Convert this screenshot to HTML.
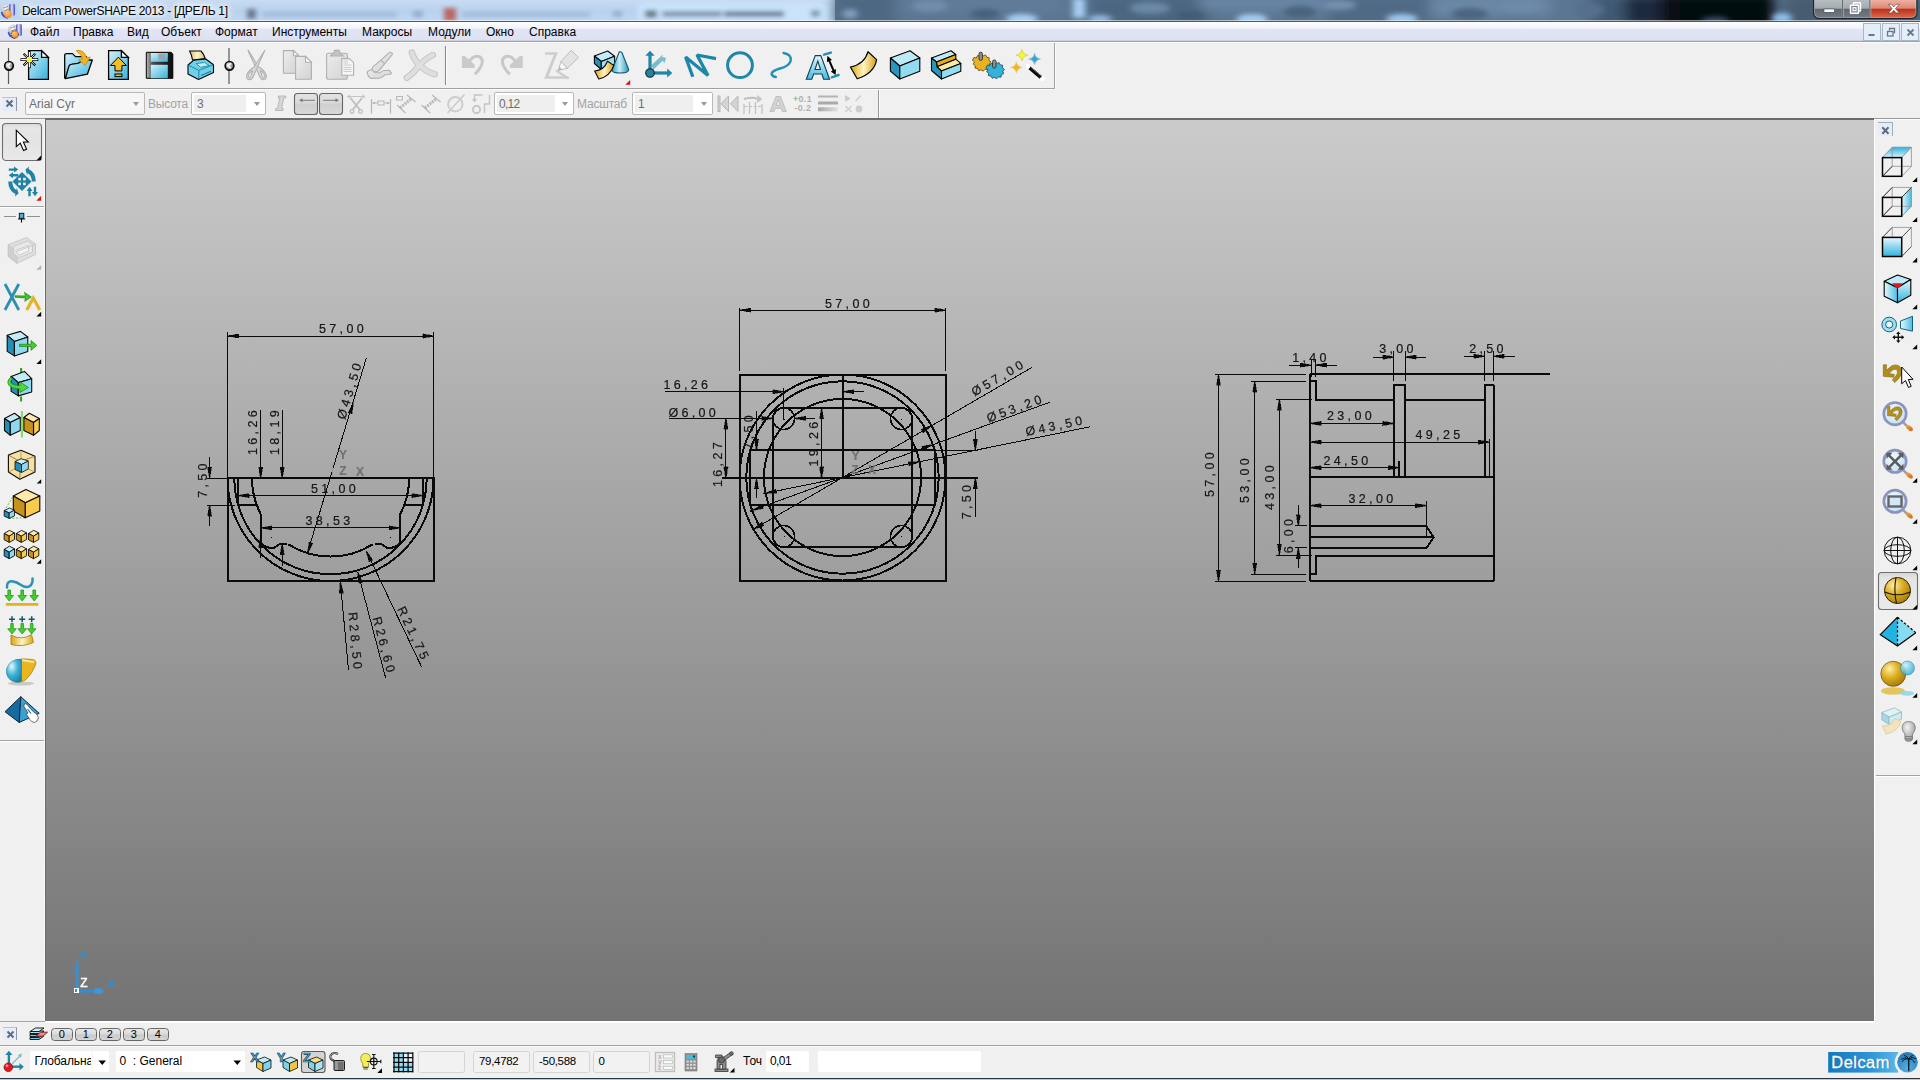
<!DOCTYPE html>
<html><head><meta charset="utf-8"><title>Delcam PowerSHAPE 2013</title>
<style>
html,body{margin:0;padding:0;}
body{width:1920px;height:1080px;overflow:hidden;position:relative;background:#f0f0f0;font-family:"Liberation Sans",sans-serif;font-size:12px;color:#000;}
.abs{position:absolute;}
#titlebar{left:0;top:0;width:1920px;height:21px;background:linear-gradient(90deg,#bcd5ee 0px,#b6d0ec 230px,#a9c8ea 470px,#b3d3f5 700px,#b4d4f6 830px,#5d7892 835px,#58738d 960px,#4a6580 1100px,#5f7c98 1250px,#4d6781 1400px,#1e2d3c 1560px,#0c141d 1700px,#101a25 1800px,#3a5068 1920px);}
#titleline{left:0;top:21px;width:1920px;height:1px;background:#4e5866;}
#titleline0{left:0;top:20px;width:1920px;height:1px;background:rgba(255,255,255,0.55);}
#menubar{left:0;top:22px;width:1920px;height:18px;background:linear-gradient(180deg,#fefeff 0%,#f3f5fb 32%,#e2e5f5 42%,#dee1f3 100%);}
#menuline{left:0;top:40px;width:1920px;height:1px;background:#cdd0dd;}
#menuline1{left:0;top:41px;width:1920px;height:1px;background:#a4a4a8;}
#menuline2{left:0;top:42px;width:1920px;height:1px;background:#fbfbfb;}
.menu{position:absolute;top:25px;font-size:12px;line-height:14px;color:#000;white-space:nowrap;}
#tb1{left:0;top:43px;width:1054px;height:45px;border-right:1px solid #a0a0a0;border-bottom:1px solid #a0a0a0;box-sizing:content-box;box-shadow:1px 1px 0 #fcfcfc;}
#tb2{left:0;top:90px;width:878px;height:28px;border-right:1px solid #989898;box-shadow:1px 0 0 #fcfcfc;}
#topline{left:0;top:118px;width:1920px;height:1px;background:#9a9a9a;}
#topline2{left:0;top:119px;width:1920px;height:1px;background:#fcfcfc;}
#vpwr{left:1874px;top:119px;width:1px;height:903px;background:#fff;}
#vpwb{left:45px;top:1021px;width:1830px;height:2px;background:#fff;}
#lbl{left:0;top:1021px;width:45px;height:1px;background:#a6a6a6;}
#viewport{left:45px;top:118px;width:1829px;height:903px;background:#6b6b6b;}
#vpgrad{left:46px;top:120px;width:1828px;height:901px;background:linear-gradient(180deg,#cbcbcb 0%,#737373 100%);}
#leftbar{left:0;top:119px;width:44px;height:902px;background:#f0f0f0;border-right:1px solid #f8f8f8;}
#rightbar{left:1875px;top:120px;width:45px;height:902px;background:#f0f0f0;}
#layerbar{left:0;top:1023px;width:1920px;height:22px;background:#f0f0f0;}
#statline{left:0;top:1045px;width:1920px;height:1px;background:#a0a0a0;}
#statline2{left:0;top:1046px;width:1920px;height:1px;background:#fbfbfb;}
#statbar{left:0;top:1047px;width:1920px;height:31px;background:#f0f0f0;}
#botedge{left:0;top:1078px;width:1920px;height:1px;background:#2c3440;}
#botedge2{left:0;top:1079px;width:1920px;height:1px;background:#b8c8dc;}
svg{position:absolute;left:0;top:0;overflow:visible;}
svg text{font-family:"Liberation Sans",sans-serif;}

</style></head>
<body>
<div id="titlebar" class="abs"></div>
<div id="menubar" class="abs"></div>
<div id="menuline" class="abs"></div><div id="menuline1" class="abs"></div>
<div id="menuline2" class="abs"></div>
<div class="menu" style="left:30px">Файл</div>
<div class="menu" style="left:73px">Правка</div>
<div class="menu" style="left:127px">Вид</div>
<div class="menu" style="left:161px">Объект</div>
<div class="menu" style="left:215px">Формат</div>
<div class="menu" style="left:272px">Инструменты</div>
<div class="menu" style="left:362px">Макросы</div>
<div class="menu" style="left:428px">Модули</div>
<div class="menu" style="left:486px">Окно</div>
<div class="menu" style="left:529px">Справка</div>
<div class="abs" style="left:0;top:0;width:1920px;height:21px;overflow:hidden;">
<svg width="1920" height="21" viewBox="0 0 1920 21" shape-rendering="auto">
<defs>
<filter id="bl3" x="-20%" y="-100%" width="140%" height="300%"><feGaussianBlur stdDeviation="3 2.5"/></filter>
<filter id="bl2" x="-20%" y="-100%" width="140%" height="300%"><feGaussianBlur stdDeviation="2.6 2"/></filter>
<filter id="bl6" x="-20%" y="-200%" width="140%" height="500%"><feGaussianBlur stdDeviation="7 4"/></filter>
<radialGradient id="aig" cx="0.4" cy="0.3" r="0.8"><stop offset="0" stop-color="#ffffff"/><stop offset="1" stop-color="#8d8d92"/></radialGradient><linearGradient id="aic" x1="0" y1="0" x2="1" y2="0"><stop offset="0" stop-color="#3d44b8"/><stop offset="0.45" stop-color="#e6e8ff"/><stop offset="1" stop-color="#3a3fae"/></linearGradient><radialGradient id="aio" cx="0.4" cy="0.3" r="0.8"><stop offset="0" stop-color="#ffc87a"/><stop offset="1" stop-color="#ee7c0a"/></radialGradient><linearGradient id="tgl" x1="0" y1="0" x2="0" y2="1"><stop offset="0" stop-color="#c8dcf3"/><stop offset="0.5" stop-color="#b8d2ee"/><stop offset="1" stop-color="#bdd7f4"/></linearGradient>
<linearGradient id="cbtn" x1="0" y1="0" x2="0" y2="1"><stop offset="0" stop-color="#b9bdc2"/><stop offset="0.48" stop-color="#a4a9af"/><stop offset="0.5" stop-color="#5f666e"/><stop offset="1" stop-color="#737b85"/></linearGradient>
<linearGradient id="cred" x1="0" y1="0" x2="0" y2="1"><stop offset="0" stop-color="#eeb0a4"/><stop offset="0.48" stop-color="#dc8672"/><stop offset="0.5" stop-color="#bd2f18"/><stop offset="1" stop-color="#d9664a"/></linearGradient>
</defs>
<rect x="0" y="0" width="835" height="21" fill="url(#tgl)"/>
<!-- blurred background content on the left -->
<g filter="url(#bl2)" opacity="0.85">
<rect x="247" y="9" width="9" height="10" fill="#5d6d84"/>
<rect x="262" y="12" width="135" height="5" fill="#93a9c6" opacity="0.7"/>
<rect x="413" y="11" width="10" height="6" fill="#8ea4c2"/>
<rect x="444" y="8" width="12" height="13" fill="#b9544e"/>
<rect x="462" y="12" width="128" height="5" fill="#93aaca" opacity="0.7"/>
<rect x="613" y="11" width="9" height="6" fill="#8fa7c6"/>
</g>
<g filter="url(#bl2)">
<rect x="638" y="3" width="192" height="20" rx="4" fill="#c9e3fc"/>
<rect x="645" y="10" width="12" height="8" fill="#6e7f8f"/>
<rect x="662" y="11" width="60" height="6" fill="#6b8099" opacity="0.75"/>
<rect x="724" y="11" width="60" height="6" fill="#4f6480" opacity="0.75"/>
<rect x="811" y="10" width="9" height="7" fill="#8199b6"/>
</g>
<!-- right dark blurred photo -->
<rect x="835" y="0" width="1085" height="21" fill="#5b7692"/>
<g filter="url(#bl6)">
<rect x="835" y="-5" width="60" height="30" fill="#4d6782"/>
<rect x="900" y="-4" width="160" height="16" fill="#607c99"/>
<rect x="1090" y="-4" width="120" height="30" fill="#4b6680"/>
<rect x="1200" y="-4" width="160" height="14" fill="#6786a5"/>
<rect x="1330" y="-4" width="100" height="30" fill="#4f6a85"/>
<rect x="1430" y="-4" width="120" height="20" fill="#6a88a6"/>
<rect x="1590" y="-4" width="50" height="30" fill="#3f5871"/><rect x="1625" y="-4" width="60" height="30" fill="#1c2c3d"/>
<rect x="1660" y="-6" width="115" height="34" fill="#070d14"/>
<rect x="1680" y="-6" width="85" height="34" fill="#04080e"/>
<rect x="1785" y="-4" width="140" height="30" fill="#465b70"/>
</g>
<g filter="url(#bl3)">
<ellipse cx="930" cy="6" rx="18" ry="6" fill="#6f8dab"/><ellipse cx="985" cy="14" rx="14" ry="5" fill="#45607b"/><ellipse cx="1150" cy="8" rx="20" ry="6" fill="#6b89a7"/><ellipse cx="1190" cy="16" rx="14" ry="5" fill="#425c76"/><ellipse cx="1300" cy="12" rx="16" ry="6" fill="#4a647e"/><ellipse cx="1340" cy="5" rx="16" ry="5" fill="#7391af"/><ellipse cx="1470" cy="14" rx="18" ry="6" fill="#4b6580"/><ellipse cx="1520" cy="6" rx="18" ry="6" fill="#6d8ba9"/><ellipse cx="1590" cy="10" rx="14" ry="8" fill="#55708c"/>
<ellipse cx="1022" cy="19" rx="16" ry="5" fill="#a8d0f7"/>
<rect x="1073" y="-2" width="12" height="20" fill="#a9cdf2"/>
<ellipse cx="1100" cy="19" rx="12" ry="4" fill="#93bbe4"/>
<ellipse cx="1252" cy="19" rx="16" ry="5" fill="#a6cef6"/>
<ellipse cx="1402" cy="19" rx="16" ry="5" fill="#9fc8f0"/>
<ellipse cx="1715" cy="20" rx="14" ry="3" fill="#3c5874"/>
<ellipse cx="1782" cy="18" rx="10" ry="5" fill="#8ec1f0"/>
<ellipse cx="850" cy="14" rx="8" ry="5" fill="#7f9fbf"/>
</g>
<!-- caption buttons -->
<path d="M1813.500 0 V12.500 Q1813.500 18.500 1819.500 18.500 H1911 Q1917 18.500 1917 12.500 V0" fill="#1a222b" stroke="#1a222b" stroke-width="1"/>
<path d="M1814.500 0 V12.500 Q1814.500 17.500 1819.500 17.500 H1842 V0 Z" fill="url(#cbtn)"/>
<rect x="1843.300" y="0" width="26" height="17.500" fill="url(#cbtn)"/>
<path d="M1870.500 0 V17.500 H1911 Q1916 17.500 1916 12.500 V0 Z" fill="url(#cred)"/>
<path d="M1814.500 0 V12.500 Q1814.500 17.500 1819.500 17.500 H1911 Q1916 17.500 1916 12.500 V0 M1842.300 0 V17 M1843.500 0 V17 M1869.700 0 V17 M1870.800 0 V17" fill="none" stroke="#e4e8ec" stroke-opacity="0.600" stroke-width="0.800"/>
<rect x="1824" y="9" width="10.500" height="3.300" fill="#fff" stroke="#3a4654" stroke-width="0.600"/>
<g fill="none" stroke="#fff" stroke-width="1.500"><path d="M1853.500 4.500 V3.200 Q1853.500 2.700 1854 2.700 H1860 Q1860.500 2.700 1860.500 3.200 V10.500 Q1860.500 11 1860 11 H1859"/><rect x="1850.500" y="5.200" width="8" height="8" rx="0.500" fill="#7d848c"/><rect x="1853" y="7.700" width="3" height="3" stroke-width="1.200"/></g>
<g stroke="#4a1a12" stroke-width="0.500" fill="#fff"><path d="M1888.300 4.300 h3.300 l2.200 2.600 l2.200 -2.600 h3.300 l-3.900 4.300 l3.900 4.300 h-3.300 l-2.200 -2.600 l-2.200 2.600 h-3.300 l3.900 -4.300 z"/></g>
<!-- app icon -->
<g id="appicon">
<circle cx="6.600" cy="10" r="5.600" fill="url(#aig)"/>
<path d="M3 8 L8 6.500 M4 11 L9 9" stroke="#555" stroke-width="0.800" opacity="0.700"/>
<path d="M9.300 4.500 Q12.200 2.600 15 4.500 V15 Q12.200 17 9.300 15 Z" fill="url(#aic)"/>
<path d="M1.600 12 Q2.500 17 8 18" fill="none" stroke="#3f4dc4" stroke-width="1.600"/>
<circle cx="8" cy="14.300" r="3.700" fill="url(#aio)"/>
</g>
</svg>
</div>
<div class="abs" style="left:22px;top:4px;font-size:12px;line-height:15px;white-space:nowrap;letter-spacing:-0.3px;color:#000;text-shadow:0 0 6px #fff,0 0 6px #fff,0 0 10px #fff,0 0 10px #fff;" id="titletext">Delcam PowerSHAPE 2013 - [ДРЕЛЬ 1]</div>
<svg class="abs" style="left:0;top:22px" width="30" height="19" viewBox="0 22 30 19">
<g transform="translate(6.800 20.200)">
<circle cx="6.600" cy="10" r="5.600" fill="url(#aig)"/>
<path d="M3 8 L8 6.500 M4 11 L9 9" stroke="#555" stroke-width="0.800" opacity="0.700"/>
<path d="M9.300 4.500 Q12.200 2.600 15 4.500 V15 Q12.200 17 9.300 15 Z" fill="url(#aic)"/>
<path d="M1.600 12 Q2.500 17 8 18" fill="none" stroke="#3f4dc4" stroke-width="1.600"/>
<circle cx="8" cy="14.300" r="3.700" fill="url(#aio)" stroke="#111" stroke-width="0.800" stroke-dasharray="1.200 1.200"/>
</g>
</svg>
<!-- MDI child buttons -->
<svg class="abs" style="left:1860px;top:22px" width="60" height="20" viewBox="1860 22 60 20">
<g fill="#e4eef9" stroke="#a9b6c8" stroke-width="1">
<rect x="1863.500" y="23.500" width="17" height="17"/><rect x="1882.500" y="23.500" width="17" height="17"/><rect x="1901.500" y="23.500" width="17" height="17"/>
</g>
<rect x="1868.500" y="34" width="6" height="2" fill="#66788e"/>
<g fill="none" stroke="#66788e" stroke-width="1.300"><path d="M1889.500 30.500 V28.500 H1894.500 V32.500 H1893.500"/><rect x="1887.500" y="31.500" width="5.500" height="4.500" fill="#e4eef9"/></g>
<path d="M1907.500 29.500 l6 6 M1913.500 29.500 l-6 6" stroke="#66788e" stroke-width="1.800" fill="none"/>
</svg>

<div id="titleline0" class="abs"></div><div id="titleline" class="abs"></div>
<div id="tb1" class="abs"></div>
<div id="tb2" class="abs"></div>
<svg width="1920" height="120" viewBox="0 0 1920 120" shape-rendering="auto">
<defs>
<linearGradient id="cy" x1="0" y1="0" x2="1" y2="1"><stop offset="0" stop-color="#d4f1fa"/><stop offset="1" stop-color="#35b2db"/></linearGradient>
<linearGradient id="cyv" x1="0" y1="0" x2="0" y2="1"><stop offset="0" stop-color="#e6f8fd"/><stop offset="1" stop-color="#45bce0"/></linearGradient>
<linearGradient id="gd" x1="0" y1="0" x2="1" y2="0"><stop offset="0" stop-color="#d9a313"/><stop offset="0.5" stop-color="#fff3c4"/><stop offset="1" stop-color="#d9a313"/></linearGradient>
<linearGradient id="gry" x1="0" y1="0" x2="1" y2="1"><stop offset="0" stop-color="#ededed"/><stop offset="1" stop-color="#d2d2d2"/></linearGradient>
<linearGradient id="flop" x1="0" y1="0" x2="1" y2="0"><stop offset="0" stop-color="#b9b9b9"/><stop offset="0.25" stop-color="#4a4a4a"/><stop offset="1" stop-color="#0c0c0c"/></linearGradient>
<linearGradient id="cone" x1="0" y1="0" x2="1" y2="0"><stop offset="0" stop-color="#3aa4c6"/><stop offset="0.45" stop-color="#c9eef8"/><stop offset="1" stop-color="#2d98bb"/></linearGradient>
<radialGradient id="grip" cx="0.35" cy="0.35" r="0.8"><stop offset="0" stop-color="#e8e8e8"/><stop offset="1" stop-color="#6a6a6a"/></radialGradient>
<linearGradient id="paper" x1="0" y1="0" x2="1" y2="0"><stop offset="0" stop-color="#d9bb6a"/><stop offset="0.5" stop-color="#fdf3cf"/><stop offset="1" stop-color="#d9bb6a"/></linearGradient>
</defs>
<!-- grips -->
<g id="g-grip">
<path d="M8.5 48 V84" stroke="#5a5a5a" stroke-width="1.2"/>
<circle cx="9" cy="65.8" r="4.300" fill="url(#grip)" stroke="#0c0c0c" stroke-width="1.700"/>
<path d="M10.3 63.3 L7.4 65.8 L10.3 68.3" fill="none" stroke="#fff" stroke-width="1.5"/>
</g>
<g transform="translate(220.5 0)">
<path d="M8.5 48 V84" stroke="#5a5a5a" stroke-width="1.2"/>
<circle cx="9" cy="65.8" r="4.300" fill="url(#grip)" stroke="#0c0c0c" stroke-width="1.700"/>
<path d="M10.3 63.3 L7.4 65.8 L10.3 68.3" fill="none" stroke="#fff" stroke-width="1.5"/>
</g>
<!-- new -->
<g stroke="#000" stroke-width="1.3" stroke-linejoin="miter">
<path d="M28.6 50.7 H41.6 L48.4 57.4 V79.3 H28.6 Z" fill="url(#cy)"/>
<path d="M41.6 50.7 V57.4 H48.4 Z" fill="#fff"/>
</g>
<g stroke="#000" stroke-width="2.6" stroke-linecap="butt"><path d="M20.5 59.6 H38.3 M29.4 51.3 V68.2"/><path d="M23.6 53.8 L35.2 65.4 M35.2 53.8 L23.6 65.4" stroke-width="2.2"/></g>
<g stroke="#fff" stroke-width="1.2"><path d="M21.2 59.6 H37.6 M29.4 52 V67.5"/><path d="M24.2 54.4 L34.6 64.8 M34.6 54.4 L24.2 64.8" stroke-width="0.9"/></g>
<circle cx="29.4" cy="59.6" r="2.8" fill="#f4f43a"/>
<!-- open -->
<g stroke="#000" stroke-width="1.3" stroke-linejoin="round">
<path d="M64.7 78.4 V55.5 Q64.7 53.6 66.5 53.6 H72.5 L75.5 56.6 H86.5 V62" fill="url(#cy)"/>
<path d="M65.3 78.7 L68.8 66.5 Q69.5 64.5 72 64.2 L77.5 63.4 Q79.5 63 81 61.6 L83 60 H92.3 L87.4 74.2 Z" fill="url(#cy)"/>
</g>
<path d="M76.3 50.3 Q84.5 49.6 86.6 57.8 L90.4 57 L85 65.6 L78.6 59.6 L82.4 58.8 Q81.5 54 77.8 52.4 Z" fill="#f0b323" stroke="#c88a08" stroke-width="0.8"/>
<!-- import -->
<g stroke="#000" stroke-width="1.3">
<path d="M108.6 50.7 H121.4 L128.3 57.4 V79.3 H108.6 Z" fill="url(#cy)"/>
<path d="M121.4 50.7 V57.4 H128.3 Z" fill="#fff"/>
<path d="M118.4 57.2 L126.4 65.5 H121.9 V70.9 H115 V65.5 H110.4 Z" fill="#f5bd24" stroke-width="1"/>
<rect x="115" y="74" width="6.9" height="2.6" fill="#f5bd24" stroke-width="1"/>
</g>
<!-- save -->
<path d="M146.3 52.3 H171 L172.8 54 V78.3 H146.3 Z" fill="url(#flop)" stroke="#000" stroke-width="1"/>
<rect x="150.8" y="53" width="17" height="8.8" fill="url(#cy)"/>
<rect x="158.2" y="53.6" width="7.6" height="6" fill="#9aa0a3" opacity="0.85"/>
<rect x="150.8" y="64.8" width="17" height="13.4" fill="url(#cy)"/>
<!-- print -->
<g stroke="#000" stroke-width="1.1" stroke-linejoin="round">
<path d="M189.5 51 H201 Q203.5 53.5 205.2 58.5 L192.5 60 Q192 55 189.5 51 Z" fill="url(#paper)"/>
<path d="M188 65 L193.5 60.3 L205.8 59 L213.5 64.8 V72.5 L198.5 79.5 L188 74 Z" fill="#6fd0ea"/>
<path d="M188 65 L198.8 70.3 L213.5 64.8 M198.8 70.3 V79.5" fill="none" stroke="#1d7d9d" stroke-width="0.9"/>
<path d="M196.3 63.6 L204.7 62.5 L209.2 65.5 L200.5 67.3 Z" fill="#c4edf8" stroke="#1d7d9d" stroke-width="0.8"/>
<path d="M201 75.5 L211 71.3" stroke="#1d7d9d" stroke-width="1.2"/>
</g>
<!-- cut (disabled) -->
<g fill="#d9d9d9" stroke="#b2b2b2" stroke-width="1.1" stroke-linejoin="round">
<path d="M248.2 50.3 L249.2 53.5 L259.5 72 L257 66.5 Z"/>
<path d="M248.2 50.3 L258.8 67 Q264 70 265.8 74 Q267.5 78.5 264.5 79.5 Q261 80.3 259.5 76 Z M260.5 70.5 L262.2 76.5 Q263.5 78.5 264.5 77 Q265 75 263 72.5 Z" fill-rule="evenodd"/>
<path d="M264.8 50.3 L254.2 67 Q249 70 247.2 74 Q245.5 78.5 248.5 79.5 Q252 80.3 253.5 76 Z M252.5 70.5 L250.8 76.5 Q249.5 78.5 248.5 77 Q248 75 250 72.5 Z" fill-rule="evenodd"/>
</g>
<!-- copy -->
<g stroke="#b0b0b0" stroke-width="1.1" fill="url(#gry)">
<path d="M283.4 50.6 H293.5 L298.6 55.7 V73.2 H283.4 Z"/>
<path d="M293.5 50.6 V55.7 H298.6 Z" fill="#fafafa"/>
<path d="M295.6 56.4 H305.5 L311.4 62.2 V79.3 H295.6 Z"/>
<path d="M305.5 56.4 V62.2 H311.4 Z" fill="#fafafa"/>
</g>
<!-- paste -->
<g stroke="#b0b0b0" stroke-width="1.1" fill="url(#gry)">
<rect x="326.6" y="53.3" width="20.8" height="26" rx="2"/>
<path d="M330.3 56 L334.3 52.3 V50.4 H339.3 V52.3 L343.3 56 Z" fill="#c4c4c4"/>
<path d="M341.8 58.6 H349.3 L353.6 62.7 V75.2 H341.8 Z" fill="#f6f6f6"/>
<path d="M343.5 61 H348 M343.5 63 H348 M343.5 65 H351.5 M343.5 67.5 H351.5 M343.5 69.5 H351.5 M343.5 71.5 H351.5" stroke="#c0c0c0" stroke-width="0.8"/>
</g>
<!-- brush -->
<g stroke="#b0b0b0" stroke-width="1.1" fill="url(#gry)" stroke-linejoin="round">
<path d="M367.3 73 Q367 71 369.5 70.5 L372 69.5 L374.5 72.5 L380 73 Q381.5 71 384 70.5 L389.5 70.3 L391.5 73 L390 74.5 L385 74.8 L382.5 76.8 L379.5 78.3 L371 78.4 L368.5 76.5 Z"/>
<path d="M389.5 52.3 Q392 51.8 392.6 54.2 L380.5 68.8 Q378 72.5 374.5 71.8 Q371.5 70.8 372.5 67.5 Q373.5 65.8 375.5 64.8 Z"/>
<path d="M381 60.5 L384.3 63.3" fill="none"/>
</g>
<!-- delete X -->
<g fill="none" stroke-linecap="round">
<path d="M411.800 52.500 Q414 60 421 66.500 Q427.500 72.500 434.800 74.300 M432.800 55 Q424 59.500 418 67 Q412 74.500 406.800 77.800" stroke="#c3c3c3" stroke-width="6.400"/>
<path d="M411.800 52.500 Q414 60 421 66.500 Q427.500 72.500 434.800 74.300 M432.800 55 Q424 59.500 418 67 Q412 74.500 406.800 77.800" stroke="#dedede" stroke-width="4.600"/>
</g>
<!-- separator -->
<path d="M445.5 46 V85" stroke="#8a8a8a" stroke-width="1.1"/><path d="M446.6 46 V85" stroke="#fff" stroke-width="1"/>
<!-- undo -->
<g id="undo">
<path d="M461.9 55.9 H464.8 L474.7 64.8 V68 H461.9 Z" fill="#cacaca"/>
<path d="M469.3 61.6 Q473.5 54.6 479.3 56.7 Q484.8 59.6 480.3 67.6 Q478.2 71 474.9 74.3" fill="none" stroke="#c8c8c8" stroke-width="3"/>
</g>
<g transform="translate(984.7 0) scale(-1 1)">
<path d="M461.9 55.9 H464.8 L474.7 64.8 V68 H461.9 Z" fill="#cacaca"/>
<path d="M469.3 61.6 Q473.5 54.6 479.3 56.7 Q484.8 59.6 480.3 67.6 Q478.2 71 474.9 74.3" fill="none" stroke="#c8c8c8" stroke-width="3"/>
</g>
<!-- Z pen -->
<path d="M545 52.2 H557.8 L548.5 76.3 H568.6 V78.7 H544.2 L553.8 54.7 H545 Z" fill="#cdcdcd"/>
<path d="M556 70.5 L568.6 78.5" stroke="#cdcdcd" stroke-width="2.2"/>
<g stroke="#bdbdbd" stroke-width="1" fill="#e3e3e3" stroke-linejoin="round">
<path d="M571.3 50.3 L578.5 57.5 L567.3 68.3 L561 61.5 Z"/>
<path d="M561 61.5 L567.3 68.3 L558.3 70.3 Z" fill="#f8f8f8"/>
<path d="M559.8 67.3 L561.3 69.5 L558.3 70.3 Z" fill="#aaa"/>
</g>
<!-- shapes -->
<g stroke="#0a0a0a" stroke-width="1.1" stroke-linejoin="round">
<path d="M594.4 56 L607.7 51 L614.6 56.2 L601.3 61.5 Z" fill="#c3ecf8"/>
<path d="M594.4 56 L601.3 61.5 V69.5 L594.4 63.5 Z" fill="#2590b6"/>
<path d="M601.3 61.5 L614.6 56.2 V64 L601.3 69.5 Z" fill="#9adff2"/>
<path d="M619.3 51.8 Q621 51.4 622 52.8 L628.6 69.3 Q629 71.5 625 72.6 Q619.5 73.6 614.5 72.4 Q611.5 71.5 612.3 69.5 Z" fill="url(#cone)" stroke="#16566f"/>
<path d="M594.6 71 Q604 70.5 607.5 61.3 L613.8 65.4 Q610 76.5 598.8 79 Z" fill="url(#gd)"/>
</g>
<path d="M630.2 80 V84.8 H625.2 Z" fill="#e10c0c"/>
<!-- axes -->
<g fill="#1e86a8" stroke="none">
<path d="M651.5 65 L663 54.5 L661.5 59.3 L665.7 58 L664.4 62.6 L662.8 60.5 L653 70 Z" fill="#7abccf"/>
<path d="M660.3 56.8 L665.8 57.8 L664.6 63.2 Z" fill="#7abccf"/>
<rect x="648.4" y="55" width="3.2" height="18"/>
<path d="M645.3 55.8 L650 50.7 L654.7 55.8 Z"/>
<rect x="650" y="71.4" width="18" height="3.2"/>
<path d="M667.2 68.4 L672.3 73 L667.2 77.6 Z"/>
<circle cx="650" cy="73" r="4.3" fill="#2b7f9b" stroke="#062a36" stroke-width="1.1"/>
</g>
<!-- polyline -->
<path d="M692.8 76.8 L685.6 57 L708 75.5 L697 55 L716 58.6" fill="none" stroke="#1e86a8" stroke-width="3.3" stroke-linejoin="miter" stroke-miterlimit="2.2"/>
<!-- circle -->
<circle cx="740" cy="65.2" r="12.4" fill="none" stroke="#1e86a8" stroke-width="3"/>
<!-- curve -->
<path d="M783.6 53 Q792 54.5 790.6 61 Q789 66.2 780 68.5 Q771.5 71 771.7 74 Q772 76.3 775.8 77" fill="none" stroke="#2391b2" stroke-width="2.5" stroke-linecap="round"/>
<!-- A text -->
<path d="M806.3 79.2 L815.3 55.6 H820.8 L829.6 79.2 H823.6 L821.9 74 H813.6 L811.8 79.2 Z M815 69.5 H820.5 L817.8 61 Z" fill="url(#cyv)" stroke="#0e3f52" stroke-width="1.1" fill-rule="evenodd"/>
<path d="M824 54.6 L830.8 52.6 M831.8 77.3 L838.6 75" stroke="#1f8fb2" stroke-width="2.4" stroke-linecap="round"/>
<path d="M827.4 55.8 L832 60 L830.3 60.6 L834.3 69.8 L836 69.2 L835.6 75 L830.8 71.4 L832.5 70.7 L828.6 61.4 L826.9 62 Z" fill="#000"/>
<!-- surface -->
<path d="M868 51.7 L876.6 59.6 Q874.5 73 857.2 78.8 L850.4 67 Q864.5 64.5 868 51.7 Z" fill="url(#gd)" stroke="#000" stroke-width="1.2" stroke-linejoin="round" transform="rotate(0)"/>
<!-- block -->
<g stroke="#000" stroke-width="1.1" stroke-linejoin="round">
<path d="M890.4 58 L910 50.7 L919.8 58 L899.8 66 Z" fill="#bdeaf7"/>
<path d="M890.4 58 L899.8 66 V79 L890.4 71.2 Z" fill="#2797bd"/>
<path d="M899.8 66 L919.8 58 V71.2 L899.8 79 Z" fill="#93dbf0"/>
</g>
<!-- stepped block -->
<g stroke="#000" stroke-width="1.1" stroke-linejoin="round">
<path d="M931.5 58 L951 50.8 L955.8 54.5 L936.5 62 Z" fill="#bdeaf7"/>
<path d="M936.5 62 L955.8 54.5 V59.2 L937 66.8 Z" fill="#e3ac17"/>
<path d="M937 66.8 L955.8 59.2 L960.8 63.4 L941.5 71 Z" fill="#fbe9a4"/>
<path d="M931.5 58 L936.5 62 L937 66.8 L941.5 71 V79 L931.5 70.5 Z" fill="#2797bd"/>
<path d="M941.5 71 L960.8 63.4 V71.2 L941.5 79 Z" fill="#93dbf0"/>
</g>
<!-- gears -->
<g stroke="#3a2c05" stroke-width="0.8">
<path transform="translate(980.8 63) scale(0.84) translate(-982.5 -63.3)" d="M972.5 60 l2-3.5 l2.5 1 l1.5-3 l3 .6 l1.5-2 l2.8 1.6 l2.4-1 l1.5 2.8 l2.8 .5 l-.3 3 l2.3 1.8 l-1.8 2.5 l1 2.6 l-2.8 1.4 l-.4 2.8 l-3.1-.3 l-2 2.2 l-2.6-1.6 l-2.8 1 l-1.4-2.7 l-3-.3 l.2-3 l-2.4-1.8 l1.7-2.5 Z" fill="#e8b223"/>
<path transform="translate(994.3 70.6) scale(0.84) translate(-995.5 -71.3)" d="M985.5 68 l2-3.5 l2.5 1 l1.5-3 l3 .6 l1.5-2 l2.8 1.6 l2.4-1 l1.5 2.8 l2.8 .5 l-.3 3 l2.3 1.8 l-1.8 2.5 l1 2.6 l-2.8 1.4 l-.4 2.8 l-3.1-.3 l-2 2.2 l-2.6-1.600 l-2.8 1 l-1.4-2.700 l-3-.300 l.2-3 l-2.400-1.800 l1.700-2.500 Z" fill="#35b2db" stroke="#06303e"/>
</g>
<g stroke="#222" stroke-width="0.8"><rect x="979" y="52.3" width="3.4" height="8" rx="1.4" fill="#8e9396"/><rect x="992.6" y="60" width="3.4" height="8" rx="1.4" fill="#8e9396"/></g>
<!-- wand -->
<path d="M1022 49.6 Q1022.8 54.2 1027.8 55.2 Q1022.8 56.2 1022 60.8 Q1021.2 56.2 1016.2 55.2 Q1021.200 54.200 1022 49.600 Z" fill="#f6f62a" stroke="#cfcf4e" stroke-width="0.8"/>
<path d="M1034.6 53.4 Q1035.4 58 1040.4 59 Q1035.4 60 1034.6 64.600 Q1033.800 60 1028.800 59 Q1033.800 58 1034.600 53.400 Z" fill="#3ea3c8" stroke="#7cc4dc" stroke-width="0.8"/>
<path d="M1016.4 61.4 Q1017.2 66.4 1022.400 67.400 Q1017.200 68.400 1016.400 73.400 Q1015.600 68.400 1010.400 67.400 Q1015.600 66.400 1016.400 61.400 Z" fill="#f1b328" stroke="#f3d587" stroke-width="0.8"/>
<path d="M1028 66.3 L1042.600 78.800" stroke="#fff" stroke-width="4.6" stroke-linecap="round"/>
<path d="M1029.6 67.800 L1040.800 77.300" stroke="#0c0c0c" stroke-width="3.6" stroke-linecap="butt"/>
<path d="M1030.800 67.200 L1041.800 76.400" stroke="#7a7a7a" stroke-width="1" stroke-linecap="butt"/>
</svg>

<style>
.cb{position:absolute;top:92px;height:22.5px;box-sizing:border-box;border:1px solid #b8b8b8;border-radius:2px;background:#fff;}
.cb .in{position:absolute;left:2px;top:2px;bottom:2px;background:#efefef;}
.cb .tx{position:absolute;top:4px;font-size:12px;line-height:14px;color:#6e6e6e;white-space:nowrap;}
.cb .ar{position:absolute;right:5px;top:9px;width:0;height:0;border-left:3.5px solid transparent;border-right:3.5px solid transparent;border-top:4px solid #9a9a9a;}
.lb2{position:absolute;top:97px;letter-spacing:-0.2px;font-size:12px;line-height:14px;color:#a2a2a2;white-space:nowrap;}
</style>
<div class="abs" style="left:2px;top:97px;width:15px;height:14px;background:#e6edf8;border-top:1px solid #b9c3d2;border-right:1px solid #8c97a8;box-sizing:border-box;"></div>
<div class="cb" style="left:25px;width:120px;background:#f6f6f6;"><div class="tx" style="left:3px;">Arial Cyr</div><div class="ar"></div></div>
<div class="lb2" style="left:148px;">Высота</div>
<div class="cb" style="left:191px;width:75px;"><div class="in" style="width:52px;"></div><div class="tx" style="left:5px;">3</div><div class="ar"></div></div>
<div class="cb" style="left:494px;width:80px;"><div class="in" style="width:58px;"></div><div class="tx" style="left:4px;letter-spacing:-0.7px;">0,12</div><div class="ar"></div></div>
<div class="lb2" style="left:577px;letter-spacing:-0.2px;">Масштаб</div>
<div class="cb" style="left:632px;width:81px;"><div class="in" style="width:58px;"></div><div class="tx" style="left:5px;">1</div><div class="ar"></div></div>
<svg width="1920" height="120" viewBox="0 0 1920 120">
<defs><linearGradient id="pb" x1="0" y1="0" x2="0" y2="1"><stop offset="0" stop-color="#e3e3e3"/><stop offset="0.45" stop-color="#dadada"/><stop offset="0.5" stop-color="#cfcfcf"/><stop offset="1" stop-color="#d8d8d8"/></linearGradient>
<linearGradient id="lg3" x1="0" y1="0" x2="1" y2="0"><stop offset="0" stop-color="#a8a8a8"/><stop offset="1" stop-color="#e0e0e0"/></linearGradient></defs>
<path d="M6.5 100.500 l6 6 M12.500 100.500 l-6 6" stroke="#5d6c80" stroke-width="2" fill="none"/>
<!-- I -->
<path d="M278.5 96 H286 L285.500 98 H283.800 L281.500 108.500 H283.300 L282.800 110.500 H275.300 L275.800 108.500 H277.500 L279.800 98 H278 Z" fill="#d6d6d6" stroke="#b4b4b4" stroke-width="0.9"/>
<!-- pressed buttons -->
<rect x="294.500" y="93.500" width="23" height="21" rx="3" fill="url(#pb)" stroke="#666" stroke-width="1.100"/>
<rect x="319.500" y="93.500" width="23" height="21" rx="3" fill="url(#pb)" stroke="#666" stroke-width="1.100"/>
<g stroke="#7d7d7d" stroke-width="1" fill="#7d7d7d"><path d="M300 100.300 H315"/><path d="M299 100.300 l3.500 -2 v4 z" stroke="none"/><path d="M323 100.300 H338"/><path d="M339 100.300 l-3.500 -2 v4 z" stroke="none"/></g>
<!-- scissors dim -->
<g stroke="#bdbdbd" fill="none" stroke-width="1.300">
<path d="M347.500 96.500 H365 M347.500 96.500 l2.500 -1.500 M347.500 96.500 l2.500 1.500 M365 96.500 l-2.500 -1.500 M365 96.500 l-2.500 1.500" stroke-width="0.9"/>
<path d="M350.500 98 L360 110 M362 98 L352.500 110" stroke-width="1.800"/>
<circle cx="352" cy="111.500" r="1.800"/><circle cx="360.500" cy="111.500" r="1.800"/>
</g>
<!-- |<-[]->| -->
<g stroke="#b5b5b5" fill="none" stroke-width="1.200">
<path d="M371.500 99 V113.500 M390.500 99 V113.500"/>
<path d="M372.500 103 H377.500 M384.500 103 H389.500" stroke-width="1"/>
<path d="M372.500 103 l2.500 -1.500 v3 z M389.500 103 l-2.500 -1.500 v3 z" fill="#b5b5b5" stroke="none"/>
<rect x="378" y="101" width="6" height="4" stroke-width="1"/>
</g>
<!-- icon 5 -->
<g stroke="#b8b8b8" fill="none" stroke-width="1.200">
<rect x="396.500" y="96.500" width="6" height="3.500" stroke-width="1"/>
<path d="M407 95 L415.500 102 M397 105 L405.500 113"/>
<path d="M400 108 L411 99" stroke-width="3" stroke-dasharray="2 1"/>
</g>
<!-- icon 6 -->
<g stroke="#b8b8b8" fill="none" stroke-width="1.200">
<path d="M432 95 L440.500 102 M421.500 105 L430 113"/>
<path d="M425 108 L436 99" stroke-width="3" stroke-dasharray="2 1"/>
</g>
<!-- dia -->
<g stroke="#cdcdcd" fill="none" stroke-width="2"><circle cx="455.300" cy="104.300" r="7.200"/><path d="M447.500 113 L464.500 94.500" stroke-width="1.800"/></g>
<!-- icon 8 -->
<g stroke="#c4c4c4" fill="none" stroke-width="1.400">
<path d="M474.500 101 V95 H482.500"/><path d="M472 99 L474.500 102.500 L477 99 Z" fill="#c4c4c4" stroke="none"/>
<circle cx="476.500" cy="109.500" r="3.600" stroke-width="1.800"/>
<path d="M484.500 113 V104 H489.500 V95"/>
</g>
<!-- |<< -->
<g fill="#d4d4d4" stroke="#b6b6b6" stroke-width="1"><rect x="718" y="96" width="2" height="15.500"/><path d="M728.500 96 V111.500 L721 103.800 Z"/><path d="M738 96 V111.500 L730.500 103.800 Z"/></g>
<!-- dims icon -->
<g stroke="#c0c0c0" fill="none" stroke-width="1.200">
<path d="M744 99 Q753 96.500 757.500 99" stroke-width="2"/><path d="M757 95 L762.500 99 L757 103 Z" fill="#c6c6c6" stroke="none"/>
<path d="M744 104 V114 M749.500 102 V114 M755.500 102 V114 M762 104 V114"/>
<path d="M744.500 106.500 H762" stroke-width="1" stroke-dasharray="3 1.500"/>
</g>
<!-- A -->
<path d="M770 111.500 L776 96.500 H780.500 L786.300 111.500 H782.300 L781.200 108.300 H775.200 L774 111.500 Z M776.200 105.300 H780.200 L778.200 99.500 Z" fill="#d2d2d2" stroke="#bcbcbc" stroke-width="0.900" fill-rule="evenodd"/>
<text x="793" y="102" font-size="9" font-weight="bold" fill="#b0b0b0" style="font-family:'Liberation Sans',sans-serif" letter-spacing="0.300">+0.1</text>
<text x="794.500" y="111" font-size="9" font-weight="bold" fill="#b0b0b0" style="font-family:'Liberation Sans',sans-serif" letter-spacing="0.300">-0.2</text>
<!-- lines -->
<rect x="818" y="95.500" width="20" height="2" fill="#b4b4b4"/><rect x="818" y="101.500" width="20" height="3" fill="#aaa"/><rect x="818" y="107.300" width="20" height="4" fill="url(#lg3)"/>
<!-- play/x/dot -->
<g fill="#cdcdcd" stroke="none"><path d="M845 95 L851 98.500 L845 102 Z"/><circle cx="859" cy="109" r="3.400"/></g>
<g stroke="#cdcdcd" stroke-width="1.200" fill="none"><path d="M855.500 101 L861 95.500"/><path d="M845.500 106 L851.500 112 M851.500 106 L845.500 112"/></g>
</svg>

<div id="topline" class="abs"></div><div id="topline2" class="abs"></div>
<div id="viewport" class="abs"></div>
<div id="vpgrad" class="abs"></div><div id="vpwr" class="abs"></div><div id="vpwb" class="abs"></div>
<svg width="1920" height="1080" viewBox="0 0 1920 1080" shape-rendering="crispEdges" style="will-change:transform">
<g stroke="#0a0a0a" fill="none" stroke-linecap="butt">
<path d="M227.5 478.0 H433.5 V581.0 H227.5 Z" stroke-width="2" fill="none"/>
<path d="M227.5 478.0 A103.0 103.0 0 0 0 433.5 478.0" stroke-width="2" fill="none"/>
<path d="M234.3 478.0 A96.2 96.2 0 0 0 426.7 478.0" stroke-width="2" fill="none"/>
<path d="M238.3 478.0 V505.1 H256.7" stroke-width="2" fill="none"/>
<path d="M422.7 478.0 V505.1 H404.3" stroke-width="2" fill="none"/>
<path d="M251.9 478.0 A78.6 78.6 0 0 0 260.9 514.5 V543.3 C264.5 547.0 268.5 548.0 272.5 548.0 C276.5 548.0 277.5 544.0 280.5 544.0 H286.5" stroke-width="2" fill="none"/>
<path d="M409.1 478.0 A78.6 78.6 0 0 1 400.1 514.5 V543.3 C396.5 547.0 392.5 548.0 388.5 548.0 C384.5 548.0 383.5 544.0 380.5 544.0 H374.5" stroke-width="2" fill="none"/>
<path d="M288.5 544.4 A78.6 78.6 0 0 0 372.5 544.4" stroke-width="2" fill="none"/>
<rect x="271.0" y="536.5" width="1" height="1" fill="#0a0a0a" stroke="none"/>
<rect x="389.5" y="536.5" width="1" height="1" fill="#0a0a0a" stroke="none"/>
<line x1="227.5" y1="331.5" x2="227.5" y2="478.0" stroke-width="1"/>
<line x1="433.5" y1="331.5" x2="433.5" y2="478.0" stroke-width="1"/>
<line x1="227.5" y1="336.0" x2="433.5" y2="336.0" stroke-width="1"/>
<polygon points="227.5,335.7 238.5,333.9 238.5,338.1 227.5,336.3" fill="#0a0a0a" stroke="#0a0a0a" stroke-width="0.4"/>
<polygon points="433.5,336.3 422.5,338.1 422.5,333.9 433.5,335.7" fill="#0a0a0a" stroke="#0a0a0a" stroke-width="0.4"/>
<text x="343.0" y="333.0" font-size="12.5" letter-spacing="3.3" text-anchor="middle" fill="#151515" stroke="#151515" stroke-width="0.2">57,00</text>
<line x1="307.8" y1="551.9" x2="366.3" y2="358.1" stroke-width="1"/>
<polygon points="307.5,553.1 309.0,542.1 313.0,543.3 308.1,553.3" fill="#0a0a0a" stroke="#0a0a0a" stroke-width="0.4"/>
<polygon points="353.5,402.9 352.0,413.9 348.0,412.7 352.9,402.7" fill="#0a0a0a" stroke="#0a0a0a" stroke-width="0.4"/>
<text x="345.0" y="420.0" font-size="12.5" letter-spacing="3.3" text-anchor="start" fill="#151515" stroke="#151515" stroke-width="0.2" transform="rotate(-73.2 345.0 420.0)">Ø43,50</text>
<line x1="260.7" y1="410.0" x2="260.7" y2="478.0" stroke-width="1"/>
<polygon points="260.4,478.0 258.6,467.0 262.8,467.0 261.0,478.0" fill="#0a0a0a" stroke="#0a0a0a" stroke-width="0.4"/>
<line x1="260.7" y1="536.8" x2="260.7" y2="558.0" stroke-width="1"/>
<polygon points="261.0,536.8 262.8,547.8 258.6,547.8 260.4,536.8" fill="#0a0a0a" stroke="#0a0a0a" stroke-width="0.4"/>
<text x="257.0" y="431.0" font-size="12.5" letter-spacing="3.3" text-anchor="middle" fill="#151515" stroke="#151515" stroke-width="0.2" transform="rotate(-90.0 257.0 431.0)">16,26</text>
<line x1="282.2" y1="410.0" x2="282.2" y2="478.0" stroke-width="1"/>
<polygon points="281.9,478.0 280.1,467.0 284.3,467.0 282.5,478.0" fill="#0a0a0a" stroke="#0a0a0a" stroke-width="0.4"/>
<line x1="282.2" y1="543.9" x2="282.2" y2="565.5" stroke-width="1"/>
<polygon points="282.5,543.9 284.3,554.9 280.1,554.9 281.9,543.9" fill="#0a0a0a" stroke="#0a0a0a" stroke-width="0.4"/>
<text x="278.5" y="431.0" font-size="12.5" letter-spacing="3.3" text-anchor="middle" fill="#151515" stroke="#151515" stroke-width="0.2" transform="rotate(-90.0 278.5 431.0)">18,19</text>
<line x1="209.6" y1="456.5" x2="209.6" y2="478.0" stroke-width="1"/>
<polygon points="209.3,478.0 207.5,467.0 211.7,467.0 209.9,478.0" fill="#0a0a0a" stroke="#0a0a0a" stroke-width="0.4"/>
<line x1="209.6" y1="505.0" x2="209.6" y2="526.0" stroke-width="1"/>
<polygon points="209.9,505.0 211.7,516.0 207.5,516.0 209.3,505.0" fill="#0a0a0a" stroke="#0a0a0a" stroke-width="0.4"/>
<line x1="206.5" y1="478.0" x2="227.5" y2="478.0" stroke-width="1"/>
<line x1="206.5" y1="505.0" x2="234.5" y2="505.0" stroke-width="1"/>
<text x="207.0" y="479.0" font-size="12.5" letter-spacing="3.3" text-anchor="middle" fill="#151515" stroke="#151515" stroke-width="0.2" transform="rotate(-90.0 207.0 479.0)">7,50</text>
<line x1="238.3" y1="495.6" x2="422.7" y2="495.6" stroke-width="1"/>
<polygon points="238.3,495.3 249.3,493.5 249.3,497.7 238.3,495.9" fill="#0a0a0a" stroke="#0a0a0a" stroke-width="0.4"/>
<polygon points="422.7,495.9 411.7,497.7 411.7,493.5 422.7,495.3" fill="#0a0a0a" stroke="#0a0a0a" stroke-width="0.4"/>
<text x="335.0" y="493.0" font-size="12.5" letter-spacing="3.3" text-anchor="middle" fill="#151515" stroke="#151515" stroke-width="0.2">51,00</text>
<line x1="260.9" y1="527.9" x2="400.1" y2="527.9" stroke-width="1"/>
<polygon points="260.9,527.6 271.9,525.8 271.9,530.0 260.9,528.2" fill="#0a0a0a" stroke="#0a0a0a" stroke-width="0.4"/>
<polygon points="400.1,528.2 389.1,530.0 389.1,525.8 400.1,527.6" fill="#0a0a0a" stroke="#0a0a0a" stroke-width="0.4"/>
<text x="329.5" y="525.0" font-size="12.5" letter-spacing="3.3" text-anchor="middle" fill="#151515" stroke="#151515" stroke-width="0.2">38,53</text>
<line x1="340.4" y1="582.2" x2="348.5" y2="670.4" stroke-width="1"/>
<polygon points="340.7,582.2 343.5,593.0 339.3,593.3 340.1,582.2" fill="#0a0a0a" stroke="#0a0a0a" stroke-width="0.4"/>
<text x="348.5" y="612.5" font-size="12.5" letter-spacing="3.3" text-anchor="start" fill="#151515" stroke="#151515" stroke-width="0.2" transform="rotate(84.8 348.5 612.5)">R28,50</text>
<line x1="357.8" y1="572.2" x2="385.6" y2="677.8" stroke-width="1"/>
<polygon points="358.1,572.1 362.6,582.3 358.6,583.4 357.5,572.3" fill="#0a0a0a" stroke="#0a0a0a" stroke-width="0.4"/>
<text x="372.5" y="618.0" font-size="12.5" letter-spacing="3.3" text-anchor="start" fill="#151515" stroke="#151515" stroke-width="0.2" transform="rotate(75.3 372.5 618.0)">R26,60</text>
<line x1="366.3" y1="551.1" x2="421.5" y2="666.7" stroke-width="1"/>
<polygon points="366.6,551.0 372.9,560.1 369.1,561.9 366.0,551.2" fill="#0a0a0a" stroke="#0a0a0a" stroke-width="0.4"/>
<text x="397.0" y="609.0" font-size="12.5" letter-spacing="3.3" text-anchor="start" fill="#151515" stroke="#151515" stroke-width="0.2" transform="rotate(64.5 397.0 609.0)">R21,75</text>
<g stroke="#727272" fill="#727272">
<text x="343.0" y="459.0" font-size="12" letter-spacing="0" text-anchor="middle" fill="#727272" stroke="#727272" stroke-width="0.2" font-weight="bold">Y</text>
<text x="343.0" y="475.0" font-size="12" letter-spacing="0" text-anchor="middle" fill="#727272" stroke="#727272" stroke-width="0.2" font-weight="bold">Z</text>
<text x="360.0" y="476.0" font-size="12" letter-spacing="0" text-anchor="middle" fill="#727272" stroke="#727272" stroke-width="0.2" font-weight="bold">X</text>
</g>
<path d="M332 463 V477" stroke="#9a9a9a" stroke-width="1" fill="none"/>
<path d="M739.5 374.5 H945.5 V580.5 H739.5 Z" stroke-width="2" fill="none"/>
<circle cx="842.5" cy="477.5" r="103.0" stroke-width="2" fill="none"/>
<circle cx="842.5" cy="477.5" r="96.2" stroke-width="2" fill="none"/>
<circle cx="842.5" cy="477.5" r="78.6" stroke-width="2" fill="none"/>
<rect x="772.9" y="407.9" width="139.3" height="139.3" rx="10.8" ry="10.8" stroke-width="2" fill="none"/>
<circle cx="783.7" cy="418.7" r="10.8" stroke-width="1.5" fill="none"/>
<rect x="783.7" y="418.7" width="1" height="1" fill="#0a0a0a" stroke="none"/>
<circle cx="783.7" cy="536.3" r="10.8" stroke-width="1.5" fill="none"/>
<rect x="783.7" y="536.3" width="1" height="1" fill="#0a0a0a" stroke="none"/>
<circle cx="901.3" cy="418.7" r="10.8" stroke-width="1.5" fill="none"/>
<rect x="901.3" y="418.7" width="1" height="1" fill="#0a0a0a" stroke="none"/>
<circle cx="901.3" cy="536.3" r="10.8" stroke-width="1.5" fill="none"/>
<rect x="901.3" y="536.3" width="1" height="1" fill="#0a0a0a" stroke="none"/>
<path d="M750.3 450.4 H934.7 V504.6 H750.3 Z" stroke-width="2" fill="none"/>
<line x1="722.0" y1="477.5" x2="978.0" y2="477.5" stroke-width="2"/>
<line x1="842.5" y1="374.5" x2="842.5" y2="477.5" stroke-width="2"/>
<line x1="739.5" y1="307.5" x2="739.5" y2="370.5" stroke-width="1"/>
<line x1="945.5" y1="307.5" x2="945.5" y2="370.5" stroke-width="1"/>
<line x1="739.5" y1="310.2" x2="945.5" y2="310.2" stroke-width="1"/>
<polygon points="739.5,309.9 750.5,308.1 750.5,312.3 739.5,310.5" fill="#0a0a0a" stroke="#0a0a0a" stroke-width="0.4"/>
<polygon points="945.5,310.5 934.5,312.3 934.5,308.1 945.5,309.9" fill="#0a0a0a" stroke="#0a0a0a" stroke-width="0.4"/>
<text x="849.0" y="307.5" font-size="12.5" letter-spacing="3.3" text-anchor="middle" fill="#151515" stroke="#151515" stroke-width="0.2">57,00</text>
<line x1="665.0" y1="391.7" x2="783.7" y2="391.7" stroke-width="1"/>
<polygon points="783.7,392.0 772.7,393.8 772.7,389.6 783.7,391.4" fill="#0a0a0a" stroke="#0a0a0a" stroke-width="0.4"/>
<line x1="842.5" y1="391.7" x2="864.0" y2="391.7" stroke-width="1"/>
<polygon points="842.5,391.4 853.5,389.6 853.5,393.8 842.5,392.0" fill="#0a0a0a" stroke="#0a0a0a" stroke-width="0.4"/>
<line x1="783.7" y1="388.0" x2="783.7" y2="419.5" stroke-width="1"/>
<text x="663.5" y="388.7" font-size="12.5" letter-spacing="3.3" text-anchor="start" fill="#151515" stroke="#151515" stroke-width="0.2">16,26</text>
<line x1="668.5" y1="418.4" x2="772.9" y2="418.4" stroke-width="1"/>
<polygon points="772.9,418.7 761.9,420.5 761.9,416.3 772.9,418.1" fill="#0a0a0a" stroke="#0a0a0a" stroke-width="0.4"/>
<line x1="794.6" y1="418.4" x2="815.0" y2="418.4" stroke-width="1"/>
<polygon points="794.6,418.1 805.6,416.3 805.6,420.5 794.6,418.7" fill="#0a0a0a" stroke="#0a0a0a" stroke-width="0.4"/>
<text x="668.5" y="416.5" font-size="12.5" letter-spacing="3.3" text-anchor="start" fill="#151515" stroke="#151515" stroke-width="0.2">Ø6,00</text>
<line x1="725.9" y1="418.4" x2="725.9" y2="477.5" stroke-width="1"/>
<polygon points="726.2,418.4 728.0,429.4 723.8,429.4 725.6,418.4" fill="#0a0a0a" stroke="#0a0a0a" stroke-width="0.4"/>
<polygon points="725.6,477.5 723.8,466.5 728.0,466.5 726.2,477.5" fill="#0a0a0a" stroke="#0a0a0a" stroke-width="0.4"/>
<text x="722.0" y="463.0" font-size="12.5" letter-spacing="3.3" text-anchor="middle" fill="#151515" stroke="#151515" stroke-width="0.2" transform="rotate(-90.0 722.0 463.0)">16,27</text>
<line x1="756.5" y1="411.0" x2="756.5" y2="450.4" stroke-width="1"/>
<polygon points="756.2,450.4 754.4,439.4 758.6,439.4 756.8,450.4" fill="#0a0a0a" stroke="#0a0a0a" stroke-width="0.4"/>
<line x1="756.5" y1="477.5" x2="756.5" y2="498.0" stroke-width="1"/>
<polygon points="756.8,477.5 758.6,488.5 754.4,488.5 756.2,477.5" fill="#0a0a0a" stroke="#0a0a0a" stroke-width="0.4"/>
<text x="752.5" y="449.5" font-size="12.5" letter-spacing="3.3" text-anchor="start" fill="#151515" stroke="#151515" stroke-width="0.2" transform="rotate(-90.0 752.5 449.5)">7,50</text>
<line x1="821.6" y1="407.9" x2="821.6" y2="477.5" stroke-width="1"/>
<polygon points="821.9,407.9 823.7,418.9 819.5,418.9 821.3,407.9" fill="#0a0a0a" stroke="#0a0a0a" stroke-width="0.4"/>
<polygon points="821.3,477.5 819.5,466.5 823.7,466.5 821.9,477.5" fill="#0a0a0a" stroke="#0a0a0a" stroke-width="0.4"/>
<text x="817.5" y="442.5" font-size="12.5" letter-spacing="3.3" text-anchor="middle" fill="#151515" stroke="#151515" stroke-width="0.2" transform="rotate(-90.0 817.5 442.5)">19,26</text>
<line x1="934.7" y1="450.4" x2="978.0" y2="450.4" stroke-width="1"/>
<line x1="975.4" y1="431.0" x2="975.4" y2="450.4" stroke-width="1"/>
<polygon points="975.1,450.4 973.3,439.4 977.5,439.4 975.7,450.4" fill="#0a0a0a" stroke="#0a0a0a" stroke-width="0.4"/>
<line x1="975.4" y1="477.5" x2="975.4" y2="517.0" stroke-width="1"/>
<polygon points="975.7,477.5 977.5,488.5 973.3,488.5 975.1,477.5" fill="#0a0a0a" stroke="#0a0a0a" stroke-width="0.4"/>
<text x="970.5" y="500.5" font-size="12.5" letter-spacing="3.3" text-anchor="middle" fill="#151515" stroke="#151515" stroke-width="0.2" transform="rotate(-90.0 970.5 500.5)">7,50</text>
<line x1="751.8" y1="530.3" x2="1032.0" y2="367.4" stroke-width="1"/>
<polygon points="931.7,425.9 923.1,433.0 921.0,429.4 931.4,425.4" fill="#0a0a0a" stroke="#0a0a0a" stroke-width="0.4"/>
<polygon points="753.3,529.1 761.9,522.0 764.0,525.6 753.6,529.6" fill="#0a0a0a" stroke="#0a0a0a" stroke-width="0.4"/>
<text x="974.5" y="396.5" font-size="12.5" letter-spacing="3.3" text-anchor="start" fill="#151515" stroke="#151515" stroke-width="0.2" transform="rotate(-30.2 974.5 396.5)">Ø57,00</text>
<line x1="750.2" y1="511.1" x2="1050.4" y2="402.0" stroke-width="1"/>
<polygon points="933.0,444.9 923.3,450.3 921.8,446.4 932.8,444.3" fill="#0a0a0a" stroke="#0a0a0a" stroke-width="0.4"/>
<polygon points="752.0,510.1 761.7,504.7 763.2,508.6 752.2,510.7" fill="#0a0a0a" stroke="#0a0a0a" stroke-width="0.4"/>
<text x="988.5" y="422.5" font-size="12.5" letter-spacing="3.3" text-anchor="start" fill="#151515" stroke="#151515" stroke-width="0.2" transform="rotate(-20.0 988.5 422.5)">Ø53,20</text>
<line x1="763.5" y1="493.7" x2="1090.4" y2="426.7" stroke-width="1"/>
<polygon points="919.6,462.0 909.1,466.0 908.3,461.9 919.4,461.4" fill="#0a0a0a" stroke="#0a0a0a" stroke-width="0.4"/>
<polygon points="765.4,493.0 775.9,489.0 776.7,493.1 765.6,493.6" fill="#0a0a0a" stroke="#0a0a0a" stroke-width="0.4"/>
<text x="1026.5" y="436.0" font-size="12.5" letter-spacing="3.3" text-anchor="start" fill="#151515" stroke="#151515" stroke-width="0.2" transform="rotate(-11.6 1026.5 436.0)">Ø43,50</text>
<g stroke="#727272" fill="#727272">
<text x="855.5" y="460.0" font-size="12" letter-spacing="0" text-anchor="middle" fill="#727272" stroke="#727272" stroke-width="0.2" font-weight="bold">Y</text>
<text x="855.0" y="474.0" font-size="12" letter-spacing="0" text-anchor="middle" fill="#727272" stroke="#727272" stroke-width="0.2" font-weight="bold">Z</text>
<text x="872.0" y="474.0" font-size="12" letter-spacing="0" text-anchor="middle" fill="#727272" stroke="#727272" stroke-width="0.2" font-weight="bold">X</text>
</g>
<line x1="1310.0" y1="374.0" x2="1550.0" y2="374.0" stroke-width="2"/>
<line x1="1310.0" y1="374.0" x2="1310.0" y2="580.5" stroke-width="2"/>
<line x1="1310.0" y1="580.5" x2="1494.0" y2="580.5" stroke-width="2"/>
<line x1="1494.0" y1="384.8" x2="1494.0" y2="580.5" stroke-width="2"/>
<line x1="1310.0" y1="477.3" x2="1494.0" y2="477.3" stroke-width="2"/>
<path d="M1310.0 381.4 H1316.2 V399.8 H1393.5" stroke-width="2" fill="none"/>
<path d="M1393.5 477.3 V384.8 H1405.1 V477.3" stroke-width="2" fill="none"/>
<line x1="1405.1" y1="399.8" x2="1484.7" y2="399.8" stroke-width="2"/>
<path d="M1484.7 477.3 V384.8 H1494.0" stroke-width="2" fill="none"/>
<path d="M1310.0 574 H1316.2 V555.9 H1494.0" stroke-width="2" fill="none"/>
<path d="M1310.0 526.1 H1426.4 L1433.6 537.2 L1426.4 548.1 H1310.0" stroke-width="2" fill="none"/>
<line x1="1310.0" y1="537.2" x2="1433.6" y2="537.2" stroke-width="2"/>
<line x1="1399.4" y1="461.3" x2="1399.4" y2="477.3" stroke-width="2"/>
<line x1="1489.4" y1="439.2" x2="1489.4" y2="477.3" stroke-width="1.5"/>
<line x1="1215.0" y1="374.4" x2="1306.0" y2="374.4" stroke-width="1"/>
<line x1="1215.0" y1="581.3" x2="1306.0" y2="581.3" stroke-width="1"/>
<line x1="1218.5" y1="374.4" x2="1218.5" y2="581.3" stroke-width="1"/>
<polygon points="1218.8,374.4 1220.6,385.4 1216.4,385.4 1218.2,374.4" fill="#0a0a0a" stroke="#0a0a0a" stroke-width="0.4"/>
<polygon points="1218.2,581.3 1216.4,570.3 1220.6,570.3 1218.8,581.3" fill="#0a0a0a" stroke="#0a0a0a" stroke-width="0.4"/>
<text x="1213.5" y="473.0" font-size="12.5" letter-spacing="3.3" text-anchor="middle" fill="#151515" stroke="#151515" stroke-width="0.2" transform="rotate(-90.0 1213.5 473.0)">57,00</text>
<line x1="1251.4" y1="381.4" x2="1306.0" y2="381.4" stroke-width="1"/>
<line x1="1251.4" y1="574.0" x2="1306.0" y2="574.0" stroke-width="1"/>
<line x1="1254.8" y1="381.4" x2="1254.8" y2="574.0" stroke-width="1"/>
<polygon points="1255.1,381.4 1256.9,392.4 1252.7,392.4 1254.5,381.4" fill="#0a0a0a" stroke="#0a0a0a" stroke-width="0.4"/>
<polygon points="1254.5,574.0 1252.7,563.0 1256.9,563.0 1255.1,574.0" fill="#0a0a0a" stroke="#0a0a0a" stroke-width="0.4"/>
<text x="1249.0" y="479.0" font-size="12.5" letter-spacing="3.3" text-anchor="middle" fill="#151515" stroke="#151515" stroke-width="0.2" transform="rotate(-90.0 1249.0 479.0)">53,00</text>
<line x1="1275.5" y1="399.0" x2="1311.8" y2="399.0" stroke-width="1"/>
<line x1="1275.5" y1="555.1" x2="1311.8" y2="555.1" stroke-width="1"/>
<line x1="1279.4" y1="399.0" x2="1279.4" y2="555.1" stroke-width="1"/>
<polygon points="1279.7,399.0 1281.5,410.0 1277.3,410.0 1279.1,399.0" fill="#0a0a0a" stroke="#0a0a0a" stroke-width="0.4"/>
<polygon points="1279.1,555.1 1277.3,544.1 1281.5,544.1 1279.7,555.1" fill="#0a0a0a" stroke="#0a0a0a" stroke-width="0.4"/>
<text x="1274.0" y="486.0" font-size="12.5" letter-spacing="3.3" text-anchor="middle" fill="#151515" stroke="#151515" stroke-width="0.2" transform="rotate(-90.0 1274.0 486.0)">43,00</text>
<line x1="1295.0" y1="525.5" x2="1306.6" y2="525.5" stroke-width="1"/>
<line x1="1295.0" y1="547.6" x2="1306.6" y2="547.6" stroke-width="1"/>
<line x1="1298.3" y1="504.5" x2="1298.3" y2="525.5" stroke-width="1"/>
<polygon points="1298.0,525.5 1296.2,514.5 1300.4,514.5 1298.6,525.5" fill="#0a0a0a" stroke="#0a0a0a" stroke-width="0.4"/>
<line x1="1298.3" y1="547.6" x2="1298.3" y2="568.3" stroke-width="1"/>
<polygon points="1298.6,547.6 1300.4,558.6 1296.2,558.6 1298.0,547.6" fill="#0a0a0a" stroke="#0a0a0a" stroke-width="0.4"/>
<text x="1293.0" y="534.5" font-size="12.5" letter-spacing="3.3" text-anchor="middle" fill="#151515" stroke="#151515" stroke-width="0.2" transform="rotate(-90.0 1293.0 534.5)">6,00</text>
<line x1="1289.3" y1="365.1" x2="1311.3" y2="365.1" stroke-width="1"/>
<polygon points="1311.3,365.4 1300.3,367.2 1300.3,363.0 1311.3,364.8" fill="#0a0a0a" stroke="#0a0a0a" stroke-width="0.4"/>
<line x1="1315.5" y1="365.1" x2="1337.0" y2="365.1" stroke-width="1"/>
<polygon points="1315.5,364.8 1326.5,363.0 1326.5,367.2 1315.5,365.4" fill="#0a0a0a" stroke="#0a0a0a" stroke-width="0.4"/>
<line x1="1311.3" y1="359.0" x2="1311.3" y2="376.5" stroke-width="1"/>
<line x1="1315.5" y1="359.0" x2="1315.5" y2="376.5" stroke-width="1"/>
<text x="1311.0" y="361.5" font-size="12.5" letter-spacing="3.3" text-anchor="middle" fill="#151515" stroke="#151515" stroke-width="0.2">1,40</text>
<line x1="1373.0" y1="357.1" x2="1393.5" y2="357.1" stroke-width="1"/>
<polygon points="1393.5,357.4 1382.5,359.2 1382.5,355.0 1393.5,356.8" fill="#0a0a0a" stroke="#0a0a0a" stroke-width="0.4"/>
<line x1="1405.1" y1="357.1" x2="1426.0" y2="357.1" stroke-width="1"/>
<polygon points="1405.1,356.8 1416.1,355.0 1416.1,359.2 1405.1,357.4" fill="#0a0a0a" stroke="#0a0a0a" stroke-width="0.4"/>
<line x1="1393.5" y1="351.0" x2="1393.5" y2="381.4" stroke-width="1"/>
<line x1="1405.1" y1="351.0" x2="1405.1" y2="381.4" stroke-width="1"/>
<text x="1398.0" y="353.0" font-size="12.5" letter-spacing="3.3" text-anchor="middle" fill="#151515" stroke="#151515" stroke-width="0.2">3,00</text>
<line x1="1463.5" y1="356.3" x2="1484.7" y2="356.3" stroke-width="1"/>
<polygon points="1484.7,356.6 1473.7,358.4 1473.7,354.2 1484.7,356.0" fill="#0a0a0a" stroke="#0a0a0a" stroke-width="0.4"/>
<line x1="1493.3" y1="356.3" x2="1514.5" y2="356.3" stroke-width="1"/>
<polygon points="1493.3,356.0 1504.3,354.2 1504.3,358.4 1493.3,356.6" fill="#0a0a0a" stroke="#0a0a0a" stroke-width="0.4"/>
<line x1="1484.7" y1="351.0" x2="1484.7" y2="381.4" stroke-width="1"/>
<line x1="1493.3" y1="351.0" x2="1493.3" y2="381.4" stroke-width="1"/>
<text x="1488.0" y="352.5" font-size="12.5" letter-spacing="3.3" text-anchor="middle" fill="#151515" stroke="#151515" stroke-width="0.2">2,50</text>
<line x1="1310.0" y1="423.4" x2="1393.5" y2="423.4" stroke-width="1"/>
<polygon points="1310.0,423.1 1321.0,421.3 1321.0,425.5 1310.0,423.7" fill="#0a0a0a" stroke="#0a0a0a" stroke-width="0.4"/>
<polygon points="1393.5,423.7 1382.5,425.5 1382.5,421.3 1393.5,423.1" fill="#0a0a0a" stroke="#0a0a0a" stroke-width="0.4"/>
<text x="1351.0" y="420.0" font-size="12.5" letter-spacing="3.3" text-anchor="middle" fill="#151515" stroke="#151515" stroke-width="0.2">23,00</text>
<line x1="1310.0" y1="442.1" x2="1489.4" y2="442.1" stroke-width="1"/>
<polygon points="1310.0,441.8 1321.0,440.0 1321.0,444.2 1310.0,442.4" fill="#0a0a0a" stroke="#0a0a0a" stroke-width="0.4"/>
<polygon points="1489.4,442.4 1478.4,444.2 1478.4,440.0 1489.4,441.8" fill="#0a0a0a" stroke="#0a0a0a" stroke-width="0.4"/>
<text x="1439.5" y="439.0" font-size="12.5" letter-spacing="3.3" text-anchor="middle" fill="#151515" stroke="#151515" stroke-width="0.2">49,25</text>
<line x1="1310.0" y1="467.7" x2="1399.4" y2="467.7" stroke-width="1"/>
<polygon points="1310.0,467.4 1321.0,465.6 1321.0,469.8 1310.0,468.0" fill="#0a0a0a" stroke="#0a0a0a" stroke-width="0.4"/>
<polygon points="1399.4,468.0 1388.4,469.8 1388.4,465.6 1399.4,467.4" fill="#0a0a0a" stroke="#0a0a0a" stroke-width="0.4"/>
<text x="1347.5" y="464.5" font-size="12.5" letter-spacing="3.3" text-anchor="middle" fill="#151515" stroke="#151515" stroke-width="0.2">24,50</text>
<line x1="1310.0" y1="505.6" x2="1426.4" y2="505.6" stroke-width="1"/>
<polygon points="1310.0,505.3 1321.0,503.5 1321.0,507.7 1310.0,505.9" fill="#0a0a0a" stroke="#0a0a0a" stroke-width="0.4"/>
<polygon points="1426.4,505.9 1415.4,507.7 1415.4,503.5 1426.4,505.3" fill="#0a0a0a" stroke="#0a0a0a" stroke-width="0.4"/>
<line x1="1426.4" y1="501.4" x2="1426.4" y2="537.2" stroke-width="1"/>
<text x="1372.5" y="502.5" font-size="12.5" letter-spacing="3.3" text-anchor="middle" fill="#151515" stroke="#151515" stroke-width="0.2">32,00</text>
</g>
<g stroke="none" shape-rendering="auto">
<rect x="75.5" y="962" width="3" height="27" fill="#3c8fcf"/>
<rect x="73" y="970" width="3" height="2" fill="#3c8fcf"/>
<rect x="79" y="989.5" width="25" height="3" fill="#2f8fd6"/>
<ellipse cx="98.5" cy="991" rx="4.5" ry="3" fill="#3f96dc"/>
<rect x="74" y="988" width="5" height="5" fill="#ffffff"/>
<rect x="75" y="989" width="2" height="3" fill="#2f8fd6"/>
<text x="83.3" y="959.5" font-size="12" font-weight="bold" text-anchor="middle" fill="#2f8fd6">Y</text>
<text x="111" y="987.5" font-size="12" font-weight="bold" text-anchor="middle" fill="#2f8fd6">X</text>
<text x="84" y="986.5" font-size="12" text-anchor="middle" fill="#ffffff" stroke="#ffffff" stroke-width="0.4">Z</text>
</g>
</svg>
<div id="leftbar" class="abs"></div><div id="lbl" class="abs"></div>
<div id="rightbar" class="abs"></div>
<svg width="60" height="1080" viewBox="0 0 60 1080">
<defs>
<linearGradient id="lsel" x1="0" y1="0" x2="0" y2="1"><stop offset="0" stop-color="#d9d9d9"/><stop offset="0.12" stop-color="#e6e6e6"/><stop offset="0.5" stop-color="#e3e3e3"/><stop offset="1" stop-color="#e9e9e9"/></linearGradient>
<linearGradient id="ycube" x1="0" y1="0" x2="1" y2="1"><stop offset="0" stop-color="#ffe9a0"/><stop offset="1" stop-color="#f0b92c"/></linearGradient>
<radialGradient id="sph" cx="0.35" cy="0.3" r="0.8"><stop offset="0" stop-color="#e4f8fd"/><stop offset="0.5" stop-color="#3db4d8"/><stop offset="1" stop-color="#1a7fa3"/></radialGradient>
<linearGradient id="gdl" x1="0" y1="0" x2="1" y2="0"><stop offset="0" stop-color="#d9a313"/><stop offset="0.5" stop-color="#fff3c4"/><stop offset="1" stop-color="#d9a313"/></linearGradient>
<g id="garw"><path d="M-1.300 0 H1.300 V5.500 H4.300 L0 11 L-4.300 5.500 H-1.300 Z" fill="#3fd02a" stroke="#1e8a12" stroke-width="0.700"/></g>
<g id="ccy"><path d="M0 3.200 L5.200 0 L10.300 2.600 L5 6 Z" fill="#c3ecf8"/><path d="M0 3.200 L5 6 V12.500 L0 9.800 Z" fill="#2590b6"/><path d="M5 6 L10.300 2.600 V9.500 L5 12.500 Z" fill="#8fd8ef"/></g>
<g id="cyl"><path d="M0 3.200 L5.200 0 L10.300 2.600 L5 6 Z" fill="#ffe9a8"/><path d="M0 3.200 L5 6 V12.500 L0 9.800 Z" fill="#c8921a"/><path d="M5 6 L10.300 2.600 V9.500 L5 12.500 Z" fill="#f6cb4e"/></g>
</defs>
<!-- selected cursor button -->
<rect x="2.500" y="123.500" width="39" height="37" rx="3.500" fill="url(#lsel)" stroke="#6e6e6e" stroke-width="1.100"/>
<path d="M16.300 130.200 V146.600 L20.300 143.200 L23.600 150.600 L26.600 149.300 L23.400 142 L28.300 142 Z" fill="#fff" stroke="#000" stroke-width="1.100" stroke-linejoin="miter"/>
<path d="M41.200 155.500 V160.200 H36.500 Z" fill="#000"/>
<!-- rotate icon -->
<g fill="#2083a5" stroke="none">
<path d="M22 172 L31.500 181.500 L22 191 L12.500 181.500 Z"/>
<path d="M25.500 169.500 L29 166.500 L28.600 169 Q35.500 172 35.800 181.500 L31.800 181.500 Q31.500 175 27.600 173 L27.200 175.500 Z"/>
<path d="M18.500 193.500 L15 196.500 L15.400 194 Q8.500 191 8.200 181.500 L12.200 181.500 Q12.500 188 16.400 190 L16.800 187.500 Z"/>
<path d="M8.800 168.400 H14 V166.600 L18.300 169.600 L14 172.600 V170.800 H8.800 Z"/>
<path d="M18.300 174 H13 V172.200 L8.700 175.200 L13 178.200 V176.400 H18.300 Z"/>
<path d="M28.300 196.300 V191 H26.500 L29.500 186.700 L32.500 191 H30.700 V196.300 Z"/>
<path d="M33.800 186.700 V192 H32 L35 196.300 L38 192 H36.200 V186.700 Z"/>
</g>
<g fill="#f0f0f0"><rect x="18.300" y="177.800" width="2.600" height="2.600"/><rect x="23.100" y="177.800" width="2.600" height="2.600"/><rect x="18.300" y="182.600" width="2.600" height="2.600"/><rect x="23.100" y="182.600" width="2.600" height="2.600"/></g>
<path d="M41.200 195.800 V200.700 H36.300 Z" fill="#e10c0c"/>
<!-- separator -->
<path d="M0 206.500 H44" stroke="#a3a3a3" stroke-width="1"/><path d="M0 207.500 H44" stroke="#fff" stroke-width="1"/>
<!-- pin -->
<path d="M4 216.500 H16 M27 216.500 H40" stroke="#8f8f8f" stroke-width="1"/>
<rect x="19.300" y="213.300" width="4.500" height="5" fill="#4fb0d0" stroke="#0a0a0a" stroke-width="0.900"/>
<path d="M18 219 H25.200 M21.500 219 V222.500" stroke="#0a0a0a" stroke-width="1.100"/>
<!-- gray block -->
<g stroke="#c6c6c6" stroke-width="0.900" stroke-linejoin="round">
<path d="M8.300 244.800 L26.500 237.500 L35.500 244 V254.500 L17 263.300 L8.300 256.500 Z" fill="#dedede"/>
<path d="M8.300 244.800 L17 251.500 V263.300 L8.300 256.500 Z" fill="#d0d0d0"/>
<path d="M13.500 246.500 L27.500 241 L32.500 244.500 L32.500 252 L19 257.800 L13.500 253.500 Z" fill="#e9e9e9"/>
<path d="M15.500 250.500 L28.500 245.300 V251 L19 255.300 Z" fill="#f2f2f2"/>
<path d="M17 251.500 L35.500 244" fill="none"/>
</g>
<path d="M41.200 265 V269.800 H36.400 Z" fill="#b2b2b2"/>
<!-- X -> lambda -->
<path d="M5 284 L18.800 310 M18.800 284 L5 310" stroke="#2a8fb0" stroke-width="2.800" fill="none"/>
<path d="M26.700 310 L33.300 298 L39.800 310" stroke="#e2b427" stroke-width="3.200" fill="none" stroke-linejoin="miter"/>
<path d="M15 295.800 L25.500 296 L24.500 292.500 L31.300 297 L24.800 301.300 L25.500 298 L15 297.200 Z" fill="#3fc42a" stroke="#1e7a12" stroke-width="0.700"/>
<path d="M41.200 311.800 V316.600 H36.400 Z" fill="#000"/>
<!-- move block -->
<g stroke="#0a0a0a" stroke-width="1.100" stroke-linejoin="round">
<path d="M7.200 335.300 L20.500 331.400 L27.800 337 L14.400 341.400 Z" fill="#c3ecf8"/>
<path d="M7.200 335.300 L14.400 341.400 V355.900 L7.200 351.400 Z" fill="#2590b6"/>
<path d="M14.400 341.400 L27.800 337 V351.400 L14.400 355.900 Z" fill="#8fd8ef"/>
</g>
<path d="M19.500 344.300 H31 V340.500 L36.800 345.400 L31 350.300 V346.500 H19.500 Z" fill="#3fd02a" stroke="#1e8a12" stroke-width="0.800"/>
<path d="M41.200 359.200 V364 H36.400 Z" fill="#000"/>
<!-- rotate block -->
<path d="M21.100 368 V376.500 M21.100 396.500 V401.500" stroke="#25a31a" stroke-width="2"/>
<g stroke="#0a0a0a" stroke-width="1.100" stroke-linejoin="round">
<path d="M11.100 376.400 L24.400 371.400 L31.700 378.700 L18.300 382.600 Z" fill="#c3ecf8"/>
<path d="M11.100 376.400 L18.300 382.600 V395.900 L11.100 391.400 Z" fill="#2590b6"/>
<path d="M18.300 382.600 L31.700 378.700 V392 L18.300 395.900 Z" fill="#8fd8ef"/>
</g>
<path d="M11 377 Q6 381 9 385.500 Q12.500 389 20 389 V392.500 L28.500 387.500 L20 382 V385.500 Q13.500 385.500 11.500 383.500 Q9.800 381 12.500 379 Z" fill="#52d63c" stroke="#1e8a12" stroke-width="0.800"/>
<!-- mirror -->
<g stroke="#0a0a0a" stroke-width="1.100" stroke-linejoin="round">
<path d="M4.500 418.500 L14.500 413.300 L20.300 417.500 L10.300 422.500 Z" fill="#c3ecf8"/>
<path d="M4.500 418.500 L10.300 422.500 V435.300 L4.500 430.500 Z" fill="#2590b6"/>
<path d="M10.300 422.500 L20.300 417.500 V430.500 L10.300 435.300 Z" fill="#8fd8ef"/>
<path d="M39.300 418.500 L29.300 413.300 L23.900 417.500 L33.500 422.500 Z" fill="#ffe9a8"/>
<path d="M39.300 418.500 L33.500 422.500 V435.300 L39.300 430.500 Z" fill="#f6cb4e"/>
<path d="M33.500 422.500 L23.900 417.500 V430.500 L33.500 435.300 Z" fill="#c8921a"/>
</g>
<path d="M21.900 411 V437.500" stroke="#86d95e" stroke-width="2"/>
<!-- offset cube -->
<g stroke="#0a0a0a" stroke-width="1.100" stroke-linejoin="round">
<path d="M21 450.200 L35 456.300 V472 L19.900 479.200 L8.400 472 V455 Z" fill="#f7e0a0"/>
<path d="M8.400 455 L19.900 461.500 L35 456.300 M19.900 461.500 V479.200" fill="none" stroke="#6a5a2a" stroke-width="0.700"/>
<path d="M21 450.200 V466 L8.400 472 M21 466 L35 472" fill="none" stroke="#8a7a3a" stroke-width="0.600"/>
<path d="M15 461.500 L21 458.700 L28.300 461 L21.500 464.500 Z" fill="#c3ecf8" stroke-width="0.800"/>
<path d="M15 461.500 L21.500 464.500 V472.500 L15 469.500 Z" fill="#2590b6" stroke-width="0.800"/>
<path d="M21.500 464.500 L28.300 461 V469 L21.500 472.500 Z" fill="#8fd8ef" stroke-width="0.800"/>
</g>
<path d="M41.200 479.200 V483.600 H36.700 Z" fill="#000"/>
<!-- big+small -->
<path d="M4.200 511 L13.300 496 M9 518.300 L25.300 517.700 M14.500 511 L25.300 502.700" stroke="#3fc42a" stroke-width="0.900" stroke-dasharray="2 1.500" fill="none"/>
<g stroke="#0a0a0a" stroke-width="1.100" stroke-linejoin="round">
<path d="M13.300 496 L25.900 489.400 L39.800 496 L25.300 502.700 Z" fill="#ffe9a8"/>
<path d="M13.300 496 L25.300 502.700 V517.700 L13.300 511 Z" fill="#c8921a"/>
<path d="M25.300 502.700 L39.800 496 V511 L25.300 517.700 Z" fill="#f6cb4e"/>
</g>
<use href="#ccy" transform="translate(4.200 508) scale(1 0.830)" stroke="#0a0a0a" stroke-width="0.900"/>
<!-- six cubes -->
<g stroke="#0a0a0a" stroke-width="0.900" stroke-linejoin="round">
<use href="#cyl" transform="translate(4.200 530.400) scale(1 0.960)"/><use href="#cyl" transform="translate(16.300 530.400) scale(1 0.960)"/><use href="#cyl" transform="translate(28.500 530.400) scale(1 0.960)"/>
<use href="#ccy" transform="translate(4.200 546.200)"/><use href="#cyl" transform="translate(16.300 546.200)"/><use href="#cyl" transform="translate(28.500 546.200)"/>
</g>
<path d="M41.200 559.300 V563.800 H36.700 Z" fill="#000"/>
<!-- curve + arrows -->
<path d="M7 587.500 Q6.500 581 12 581.200 Q17 581.800 21 585 Q26 588.500 30 586 Q33 583.500 32.500 578.500" fill="none" stroke="#2a93b3" stroke-width="2.500" stroke-linecap="round"/>
<use href="#garw" transform="translate(9.200 590)"/><use href="#garw" transform="translate(22.200 590)"/><use href="#garw" transform="translate(34.200 590)"/>
<rect x="5.800" y="603" width="32.500" height="2.800" fill="#e6b21e"/>
<!-- points to surface -->
<g stroke="#15566e" stroke-width="1.500"><path d="M9 619.200 H15 M12 616.200 V622.200 M19.200 619.200 H25.200 M22.200 616.200 V622.200 M28.700 619.200 H34.700 M31.700 616.200 V622.200"/></g>
<use href="#garw" transform="translate(12 623.500) scale(1 0.950)"/><use href="#garw" transform="translate(22.200 623.500) scale(1 0.950)"/><use href="#garw" transform="translate(31.700 623.500) scale(1 0.950)"/>
<path d="M11 635 Q21.500 641 31.500 634.500 L33.500 642.500 Q22 647.500 11 644.500 Z" fill="url(#gdl)" stroke="#a57a0c" stroke-width="0.800"/>
<!-- blend -->
<ellipse cx="21" cy="683.500" rx="13" ry="2" fill="#c9c9c9"/>
<path d="M15 660 Q22 658 33 659.500 Q37 660.500 35.500 665 Q32 674 26 679.500 Q21 683.500 14 681 Z" fill="#eab61f" stroke="#a57a0c" stroke-width="0.700"/>
<path d="M22 660 Q30 661.500 34 662" stroke="#fbe49a" stroke-width="2" fill="none"/>
<path d="M21.500 659.500 Q10 658.500 6.500 669 Q5.500 680 16 682.300 Q20 682.500 21.500 681 Z" fill="url(#sph)" stroke="#1a7fa3" stroke-width="0.600"/>
<!-- pyramid -->
<g stroke="#062a3c" stroke-width="1" stroke-linejoin="round">
<path d="M20.800 696.700 L5 711.700 L19.200 722.500 Z" fill="#166b9e"/>
<path d="M20.800 696.700 L19.200 722.500 L39.200 713.300 Z" fill="#3a9fd2"/>
</g>
<path d="M24 704.500 Q25.500 703 27 704.500 L32.500 711 L37 714.500 Q40 718 37 721 L34.500 722.500 Q31.500 722.500 29.500 719 L26.500 714.500 Q26.500 713 28 713 L24 706.500 Z" fill="#fff" stroke="#333" stroke-width="0.700"/>
<path d="M27.500 709 L31 713.500" stroke="#166b9e" stroke-width="1.200"/>
<!-- bottom separator -->
<path d="M0 740.500 H44" stroke="#a3a3a3" stroke-width="1"/><path d="M0 741.500 H44" stroke="#fff" stroke-width="1"/>
</svg>

<svg width="1920" height="1080" viewBox="0 0 1920 1080" style="pointer-events:none">
<defs>
<linearGradient id="rc1" x1="0" y1="0" x2="0" y2="1"><stop offset="0" stop-color="#2fb2dc"/><stop offset="1" stop-color="#d9f3fb"/></linearGradient>
<linearGradient id="rc2" x1="0" y1="0" x2="0" y2="1"><stop offset="0" stop-color="#e8f8fd"/><stop offset="1" stop-color="#2fb2dc"/></linearGradient>
<linearGradient id="rc3" x1="0" y1="0" x2="1" y2="0"><stop offset="0" stop-color="#e8f8fd"/><stop offset="1" stop-color="#49bde2"/></linearGradient>
<radialGradient id="glass" cx="0.4" cy="0.35" r="0.75"><stop offset="0" stop-color="#f4fbff"/><stop offset="1" stop-color="#bcdcf5"/></radialGradient>
<radialGradient id="gsph" cx="0.35" cy="0.3" r="0.8"><stop offset="0" stop-color="#fff0a8"/><stop offset="0.45" stop-color="#dcae22"/><stop offset="1" stop-color="#9c7408"/></radialGradient>
<radialGradient id="csph" cx="0.35" cy="0.3" r="0.8"><stop offset="0" stop-color="#c6f0fa"/><stop offset="1" stop-color="#2aa7cf"/></radialGradient>
<radialGradient id="bulb" cx="0.4" cy="0.3" r="0.8"><stop offset="0" stop-color="#f4f4f4"/><stop offset="1" stop-color="#8a8a8a"/></radialGradient>
<linearGradient id="hand" x1="0" y1="0" x2="1" y2="1"><stop offset="0" stop-color="#f4a64a"/><stop offset="1" stop-color="#c8660e"/></linearGradient>
<linearGradient id="rsel" x1="0" y1="0" x2="0" y2="1"><stop offset="0" stop-color="#d6d6d6"/><stop offset="0.15" stop-color="#e4e4e4"/><stop offset="1" stop-color="#e9e9e9"/></linearGradient>
<g id="tri"><path d="M0 0 V4.800 H-4.800 Z" fill="#000"/></g>
<g id="lens"><circle cx="0" cy="0" r="11.200" fill="url(#glass)" stroke="#8c93bd" stroke-width="2.600"/><path d="M8 8.500 L12 12.500" stroke="#9a9ab0" stroke-width="2.500"/><path d="M11.500 11 Q15 11 17.500 14.500 Q18.500 16.500 17 17.500 Q14 17.500 11.500 14.500 Q10.500 12.500 11.500 11 Z" fill="url(#hand)"/></g>
<g id="uarr"><path d="M0 0 H3.200 L3 5.500 L5.500 3.500 Q10 -1.500 15.500 1 Q20 4.500 17.500 10.500 Q15.500 14.500 11.500 17.800 L9 15 Q12.500 12 14 9 Q15 5.500 12.500 4.500 Q10 4 7.800 6.500 L5.600 8.800 L11 9.600 L10.500 12.500 L0 11.500 Z"/></g>
</defs>
<!-- x button -->
<rect x="1878" y="122.500" width="14.500" height="13.500" fill="#e6edf8"/><path d="M1878 122.500 H1892.500 V136" fill="none" stroke="#a0abba" stroke-width="1"/>
<path d="M1882.300 127.300 l6.200 6.400 M1888.500 127.300 l-6.200 6.400" stroke="#5d6c80" stroke-width="2" fill="none"/>
<!-- cube1 -->
<g fill="none">
<path d="M1882.500 157.600 L1892.200 147.200 H1911.400 L1901.700 157.600 Z" fill="url(#rc1)" stroke="#6f8f9a" stroke-width="0.800"/>
<path d="M1911.400 147.200 V166.300 H1892.200 V147.200 M1892.200 166.300 L1882.500 176.300 M1911.400 166.300 L1901.700 176.300" stroke="#9a9a9a" stroke-width="0.900"/>
<rect x="1882.500" y="157.600" width="19.200" height="18.700" stroke="#000" stroke-width="1.500"/>
<path d="M1882.500 176.300 L1892.200 166.300" stroke="#222" stroke-width="0.900"/>
</g>
<use href="#tri" transform="translate(1917.200 177.200)"/>
<!-- cube2 -->
<g fill="none">
<path d="M1901.700 197.400 L1911.400 187.400 V206.300 L1901.700 216.300 Z" fill="url(#rc3)" stroke="#6f8f9a" stroke-width="0.800"/>
<path d="M1882.500 197.400 L1892.200 187.400 H1911.400 M1892.200 187.400 V206.300 H1911.400 M1892.200 206.300 L1882.500 216.300" stroke="#9a9a9a" stroke-width="0.900"/>
<path d="M1882.500 197.400 L1892.200 187.400 M1901.700 197.400 L1911.400 187.400" stroke="#333" stroke-width="0.900"/>
<rect x="1882.500" y="197.400" width="19.200" height="18.900" stroke="#000" stroke-width="1.500"/>
<path d="M1882.500 216.300 L1892.200 206.300" stroke="#222" stroke-width="0.900"/>
</g>
<use href="#tri" transform="translate(1917.200 217.200)"/>
<!-- cube3 -->
<g fill="none">
<path d="M1882.500 237.400 L1892.200 227.400 H1911.400 V246.500 L1901.700 256.500 M1901.700 237.400 L1911.400 227.400 M1892.200 227.400 V237" stroke="#9a9a9a" stroke-width="0.900"/>
<path d="M1882.500 237.400 L1892.200 227.400 M1901.700 237.400 L1911.400 227.400 M1901.700 256.500 L1911.400 246.500" stroke="#444" stroke-width="0.800"/>
<rect x="1882.500" y="237.400" width="19.200" height="19.100" fill="url(#rc2)" stroke="#000" stroke-width="1.500"/>
</g>
<use href="#tri" transform="translate(1917.200 257.600)"/>
<!-- iso cube -->
<g stroke="#000" stroke-width="1.100" stroke-linejoin="round">
<path d="M1897.500 275 L1910.800 279.500 L1897.500 287.800 L1884.200 281.200 Z" fill="#bfeaf7"/>
<path d="M1884.200 281.200 L1897.500 287.800 V302.800 L1884.200 296.200 Z" fill="url(#rc3)"/>
<path d="M1897.500 287.800 L1910.800 279.500 V295.300 L1897.500 302.800 Z" fill="url(#rc2)"/>
</g>
<path d="M1892 283.200 L1903 283.200 L1897.500 289 Z" fill="#e8141c"/>
<use href="#tri" transform="translate(1917.200 304.500)"/>
<!-- camera -->
<circle cx="1889.200" cy="324.500" r="7.300" fill="#9fe0f3" stroke="#15607c" stroke-width="1"/><circle cx="1889.200" cy="324.500" r="3.600" fill="#e4f7fc" stroke="#15607c" stroke-width="1"/>
<path d="M1900.500 321 L1912.500 316.300 V331.200 L1900.500 328.500 Z" fill="url(#rc3)" stroke="#15607c" stroke-width="1"/>
<path d="M1898.300 332 l2.200 2.600 h-1.500 v2.500 h2.600 v-1.500 l2.700 2.200 l-2.700 2.200 v-1.500 h-2.600 v2.500 h1.500 l-2.200 2.600 l-2.200-2.600 h1.500 v-2.500 h-2.600 v1.500 l-2.700-2.200 l2.700-2.200 v1.500 h2.600 v-2.500 h-1.500 Z" fill="#111" transform="translate(0 -0.500)"/>
<use href="#tri" transform="translate(1917.200 344.500)"/>
<!-- gold undo + mouse cursor -->
<use href="#uarr" transform="translate(1883.300 364.800)" fill="#b08e1e" stroke="#7e640c" stroke-width="0.600"/>
<path d="M1901.700 367 V383.800 L1905.500 380.500 L1908.500 387.500 L1911.200 386.300 L1908.300 379.500 L1913 379.300 Z" fill="#fff" stroke="#000" stroke-width="1" stroke-linejoin="miter"/>
<!-- magnifier undo -->
<use href="#lens" transform="translate(1895 413.700)"/>
<use href="#uarr" transform="translate(1887.500 406.500) scale(0.800)" fill="#b4901c" stroke="#7e640c" stroke-width="0.600"/>
<!-- zoom fit -->
<use href="#lens" transform="translate(1895 461.300)"/>
<g stroke="#5c5c5c" stroke-width="2.500" fill="#5c5c5c"><path d="M1889 455.300 L1901 467.300 M1901 455.300 L1889 467.300"/><path d="M1886.500 452.800 h6 l-6 6 Z M1903.500 452.800 h-6 l6 6 Z M1886.500 469.800 h6 l-6 -6 Z M1903.500 469.800 h-6 l6 -6 Z" stroke="none"/></g>
<use href="#tri" transform="translate(1917.200 478)"/>
<!-- zoom window -->
<use href="#lens" transform="translate(1895 501.300)"/>
<rect x="1888.500" y="496.500" width="13" height="10" fill="#cfe8fa" stroke="#666" stroke-width="2.400"/>
<use href="#tri" transform="translate(1917.200 519)"/>
<!-- wire sphere -->
<g fill="none" stroke="#111" stroke-width="1"><circle cx="1897.500" cy="550.500" r="13.300"/><ellipse cx="1897.500" cy="550.500" rx="6.800" ry="13.300"/><ellipse cx="1897.500" cy="550.500" rx="13.300" ry="5.800"/><path d="M1897.500 537.200 V563.800 M1884.200 550.500 H1910.800"/></g>
<use href="#tri" transform="translate(1917.200 565.500)"/>
<!-- shaded sphere selected -->
<rect x="1878.500" y="572.500" width="39" height="37" rx="3" fill="url(#rsel)" stroke="#6e6e6e" stroke-width="1.100"/>
<circle cx="1897.500" cy="590.500" r="13" fill="url(#gsph)" stroke="#2a1e00" stroke-width="1"/>
<path d="M1896 577.600 Q1893.500 590 1896.500 603.400 M1884.600 592 Q1897.500 597.500 1910.400 592" fill="none" stroke="#1a1200" stroke-width="1.100"/>
<use href="#tri" transform="translate(1917.200 604.800)"/>
<!-- pyramid -->
<path d="M1897.500 617.200 L1880.300 634.700 L1897.500 646 Z" fill="#22b4df"/>
<path d="M1897.500 617.200 L1897.500 646 L1915.800 632.700 Z" fill="#86dbf2"/>
<path d="M1897.500 617.200 L1880.300 634.700 L1897.500 646 L1915.800 632.700" fill="none" stroke="#000" stroke-width="1.200"/>
<path d="M1897.500 617.200 L1915.800 632.700 M1897.500 617.200 V646" fill="none" stroke="#000" stroke-width="1.200" stroke-dasharray="2.500 1.800"/>
<use href="#tri" transform="translate(1917.200 645.500)"/>
<!-- spheres -->
<ellipse cx="1893" cy="691" rx="12" ry="3.800" fill="#e4c45c"/><ellipse cx="1907" cy="693.300" rx="7" ry="2.400" fill="#8fd6ea" opacity="0.900"/>
<circle cx="1893.300" cy="673.800" r="12.500" fill="url(#gsph)" stroke="#6a4e04" stroke-width="0.700"/>
<circle cx="1907.500" cy="668" r="7" fill="url(#csph)" stroke="#1a7fa3" stroke-width="0.600" opacity="0.850"/>
<use href="#tri" transform="translate(1917.200 693)"/>
<!-- faded shapes + bulb -->
<g opacity="0.550" stroke="#4a8aa0" stroke-width="0.800" stroke-linejoin="round">
<path d="M1881.800 712.500 L1894.500 707.800 L1901.500 712 L1889 717 Z" fill="#d8f2fa"/>
<path d="M1881.800 712.500 L1889 717 V724.500 L1881.800 720 Z" fill="#6cc4e0"/>
<path d="M1889 717 L1901.500 712 V719 L1889 724.500 Z" fill="#b6e6f5"/>
<path d="M1882.500 726 Q1892 726 1895 718.500 L1901 721.500 Q1897.500 732 1886 734 Z" fill="#f4dc9a" stroke="#c8a84a"/>
</g>
<path d="M1908.700 721.500 Q1915.300 721.800 1915.300 728 Q1915 731.500 1912.500 734 V739 Q1912.300 741.300 1908.700 741.300 Q1905.100 741.300 1904.900 739 V734 Q1902.300 731.500 1902.100 728 Q1902.100 721.800 1908.700 721.500 Z" fill="url(#bulb)" stroke="#6a6a6a" stroke-width="0.700"/>
<path d="M1905 736.500 H1912.500 M1905 738.800 H1912.500" stroke="#6a6a6a" stroke-width="0.700"/>
<use href="#tri" transform="translate(1917.200 739.500)"/>
<!-- separator -->
<path d="M1876 775.500 H1920" stroke="#a3a3a3" stroke-width="1"/><path d="M1876 776.500 H1920" stroke="#fff" stroke-width="1"/>
</svg>

<div id="layerbar" class="abs"></div>
<div id="statline" class="abs"></div><div id="statline2" class="abs"></div>
<div id="statbar" class="abs"></div>
<style>
.lbtn{position:absolute;top:1027.500px;height:13px;width:21.500px;box-sizing:border-box;border:1px solid #676767;border-radius:3.500px;background:linear-gradient(180deg,#e8e8e8 0%,#dadada 45%,#cbcbcb 55%,#d4d4d4 100%);font-size:11px;line-height:11px;text-align:center;color:#000;}
.sbox{position:absolute;top:1051px;height:21px;box-sizing:border-box;background:#fff;border-radius:2px;}
.gbox{position:absolute;top:1050.500px;height:22px;box-sizing:border-box;background:#f2f2f2;border:1px solid #d4d4d4;border-radius:2.500px;}
.stx{position:absolute;top:1054px;font-size:12px;line-height:14px;color:#000;white-space:nowrap;}
</style>
<div class="abs" style="left:3px;top:1026.500px;width:14px;height:13px;background:#e6edf8;border-top:1px solid #b9c3d2;border-right:1px solid #8c97a8;box-sizing:border-box;"></div>
<div class="lbtn" style="left:51px;">0</div><div class="lbtn" style="left:75px;">1</div><div class="lbtn" style="left:99px;">2</div><div class="lbtn" style="left:123px;">3</div><div class="lbtn" style="left:147px;">4</div>
<div class="sbox" style="left:30px;width:79px;"></div>
<div class="stx" style="left:34.500px;width:56.500px;overflow:hidden;letter-spacing:-0.100px;">Глобальная</div>
<div class="sbox" style="left:116px;width:129px;"></div>
<div class="stx" style="left:119.500px;">0&nbsp;&nbsp;: General</div>
<div class="gbox" style="left:417.500px;width:47.500px;"></div>
<div class="gbox" style="left:473px;width:56.500px;"></div><div class="stx" style="left:479px;font-size:11.500px;letter-spacing:-0.300px;">79,4782</div>
<div class="gbox" style="left:533px;width:56.500px;"></div><div class="stx" style="left:539px;font-size:11.500px;letter-spacing:-0.300px;">-50,588</div>
<div class="gbox" style="left:593px;width:56.500px;"></div><div class="stx" style="left:598.500px;font-size:11.500px;">0</div>
<div class="stx" style="left:743px;">Точ</div>
<div class="sbox" style="left:765.500px;width:43px;"></div><div class="stx" style="left:770px;letter-spacing:-0.600px;">0,01</div>
<div class="sbox" style="left:818px;width:163px;"></div>
<svg width="1920" height="1080" viewBox="0 0 1920 1080" style="pointer-events:none">
<defs>
<linearGradient id="dlc" x1="0" y1="0" x2="1" y2="0"><stop offset="0" stop-color="#1478bd"/><stop offset="0.6" stop-color="#2f94d6"/><stop offset="1" stop-color="#5ab8ea"/></linearGradient>
<radialGradient id="dlb" cx="0.5" cy="0.8" r="0.9"><stop offset="0" stop-color="#56b0e6"/><stop offset="1" stop-color="#1d6fae"/></radialGradient>
<g id="xcube"><path d="M0 5.500 L8 2.500 L14.500 5.500 L6.500 9 Z" fill="#bfeaf7"/><path d="M0 5.500 L6.500 9 V17 L0 13 Z" fill="#f2c544"/><path d="M6.500 9 L14.500 5.500 V13.500 L6.500 17 Z" fill="#7fd2ec"/></g>
</defs>
<path d="M7.500 1031.500 l6 6 M13.500 1031.500 l-6 6" stroke="#5d6c80" stroke-width="2" fill="none"/>
<!-- layers icon -->
<g stroke="#0a0a0a" stroke-width="0.900" stroke-linejoin="round">
<path d="M30 1037.500 L35.500 1034 H44 L39 1037.500 Z M30 1037.500 V1039.500 H39 L44 1036" fill="#6cc8e6"/>
<path d="M30 1034.500 L35.500 1031 H44 L39 1034.500 Z M30 1034.500 V1036.500 H39" fill="#a8e2f3"/>
<path d="M30 1031.500 L35.500 1028 H44 L39 1031.500 Z M30 1031.500 V1033.500 H39" fill="#d4f1fa"/>
<path d="M36 1036.200 L40.500 1032.200 H47.500 L43 1036.200 Z" fill="#f08a8a" stroke="#7a1a1a"/>
</g>
<!-- wcs icon -->
<g fill="#1e86a8" stroke="none">
<path d="M9 1066 L19 1056 L17.800 1055 L22 1053.500 L20.800 1058 L19.800 1057 L10 1067 Z" fill="#7abccf"/>
<rect x="7.700" y="1054" width="2.400" height="12"/><path d="M5.300 1055 L8.900 1050.800 L12.500 1055 Z"/>
<rect x="9" y="1065.500" width="11" height="2.400"/><path d="M19.500 1063 L23.800 1066.700 L19.500 1070.400 Z"/>
</g>
<circle cx="8.300" cy="1067.300" r="4.300" fill="#e8141c" stroke="#7a0a0e" stroke-width="0.700"/><circle cx="7" cy="1065.800" r="1.400" fill="#ff9a9a"/>
<!-- combo arrows -->
<path d="M98.500 1060.500 h7.500 l-3.750 4.500 Z M233.500 1060.500 h7.500 l-3.750 4.500 Z" fill="#000"/>
<path d="M92 1051 V1072" stroke="#f3f3f3" stroke-width="1"/>
<!-- X Y Z cubes -->
<g stroke="#0a0a0a" stroke-width="0.800" stroke-linejoin="round"><use href="#xcube" transform="translate(256.500 1054.500)"/></g>
<text x="250.500" y="1062" font-size="12.500" font-weight="bold" fill="#5cc4e6" stroke="#0e3f52" stroke-width="0.700" style="font-family:'Liberation Sans',sans-serif">X</text>
<g stroke="#0a0a0a" stroke-width="0.800" stroke-linejoin="round"><g transform="translate(283 1054.500)"><path d="M0 5.500 L8 2.500 L14.500 5.500 L6.500 9 Z" fill="#bfeaf7"/><path d="M0 5.500 L6.500 9 V17 L0 13 Z" fill="#7fd2ec"/><path d="M6.500 9 L14.500 5.500 V13.500 L6.500 17 Z" fill="#f2c544"/></g></g>
<text x="277" y="1062" font-size="12.500" font-weight="bold" fill="#5cc4e6" stroke="#0e3f52" stroke-width="0.700" style="font-family:'Liberation Sans',sans-serif">Y</text>
<rect x="301.500" y="1051.500" width="23.500" height="21" rx="2.500" fill="#d4d4d4" stroke="#5a5a5a" stroke-width="1.100"/>
<g stroke="#0a0a0a" stroke-width="0.800" stroke-linejoin="round"><g transform="translate(308.500 1054.500)"><path d="M0 5.500 L8 2.500 L14.500 5.500 L6.500 9 Z" fill="#f9dc82"/><path d="M0 5.500 L6.500 9 V17 L0 13 Z" fill="#7fd2ec"/><path d="M6.500 9 L14.500 5.500 V13.500 L6.500 17 Z" fill="#a9e3f4"/></g></g>
<text x="303" y="1062" font-size="12.500" font-weight="bold" fill="#5cc4e6" stroke="#0e3f52" stroke-width="0.700" style="font-family:'Liberation Sans',sans-serif">Z</text>
<!-- lock -->
<path d="M338 1054 Q333 1051.500 330.500 1055.500 Q329.500 1059 333.500 1060.500 L335 1062.500" fill="none" stroke="#222" stroke-width="2"/>
<path d="M338 1054 Q333 1051.500 330.500 1055.500 Q329.500 1059 333.500 1060.500" fill="none" stroke="#ddd" stroke-width="0.700"/>
<rect x="334" y="1060.500" width="10.500" height="10" rx="1" fill="#9a9a9a" stroke="#1a1a1a" stroke-width="1"/>
<path d="M338 1063 H343.500 M338 1065 H343.500 M338 1067 H343.500 M338 1069 H343.500" stroke="#333" stroke-width="0.800"/>
<!-- bulb + target -->
<path d="M365.500 1053.500 Q370.500 1053.500 370.500 1058.500 Q370.500 1061.500 368.500 1063.500 V1067 H362.800 V1063.500 Q360.800 1061.500 360.800 1058.500 Q360.800 1053.500 365.500 1053.500 Z" fill="#f3ee5a" stroke="#8a8420" stroke-width="0.800"/>
<path d="M363 1067.500 H368.300 M363.500 1069 H367.800" stroke="#555" stroke-width="1"/>
<g stroke="#111" stroke-width="1.100" fill="none"><circle cx="373.800" cy="1061.500" r="3.400" fill="#e8e8e8"/><path d="M373.800 1054.500 V1068.500 M366.800 1061.500 H380.800 M372 1054.500 H375.600 M372 1068.500 H375.600 M380.800 1059.700 V1063.300"/></g>
<circle cx="373.800" cy="1061.500" r="1" fill="#111"/>
<path d="M382 1068.300 V1073 H377.300 Z" fill="#000"/>
<!-- grid -->
<rect x="393.500" y="1052.500" width="19.500" height="19.500" fill="#8fdcf2"/>
<rect x="403.500" y="1052.500" width="9.500" height="9.500" fill="#e8f6fb"/>
<path d="M393 1053 H413.500 M393 1057.700 H413.500 M393 1062.400 H413.500 M393 1067.100 H413.500 M393 1071.700 H413.500 M394 1052.200 V1072.500 M398.700 1052.200 V1072.500 M403.400 1052.200 V1072.500 M408.100 1052.200 V1072.500 M412.800 1052.200 V1072.500" stroke="#0a0a0a" stroke-width="1.250" fill="none"/>
<!-- xyz list -->
<rect x="655.500" y="1052.500" width="19" height="19" fill="#ececec" stroke="#bdbdbd" stroke-width="1.300"/>
<g fill="#fafafa" stroke="#c2c2c2" stroke-width="0.800"><rect x="663.500" y="1054.800" width="9" height="3.200"/><rect x="663.500" y="1060.500" width="9" height="3.200"/><rect x="663.500" y="1066.300" width="9" height="3.200"/></g>
<g font-size="6.500" font-weight="bold" fill="#b4b4b4" style="font-family:'Liberation Sans',sans-serif"><text x="658" y="1058.500">x</text><text x="658" y="1064">y</text><text x="658" y="1070">z</text></g>
<!-- calculator -->
<rect x="685" y="1053.500" width="12" height="17.500" fill="#8e8e8e" stroke="#7a7a7a" stroke-width="0.600"/>
<rect x="686.500" y="1055" width="9" height="4" fill="#4fb8d8"/><rect x="693" y="1055.500" width="2" height="2" fill="#0e3f52"/>
<g fill="#dcdcdc"><rect x="686.500" y="1060.500" width="2.300" height="2"/><rect x="689.900" y="1060.500" width="2.300" height="2"/><rect x="693.300" y="1060.500" width="2.300" height="2"/><rect x="686.500" y="1063.800" width="2.300" height="2"/><rect x="689.900" y="1063.800" width="2.300" height="2"/><rect x="693.300" y="1063.800" width="2.300" height="2"/><rect x="686.500" y="1067.100" width="2.300" height="2"/><rect x="689.900" y="1067.100" width="2.300" height="2"/><rect x="693.300" y="1067.100" width="2.300" height="2"/></g>
<!-- robot -->
<g stroke="#3a3a3a" stroke-width="0.800" fill="#8c8c8c">
<rect x="715" y="1069" width="13" height="2.600"/>
<path d="M717 1069 V1062 Q717 1057 721.500 1056.500 Q726 1057 726 1062 V1069 Z"/>
<path d="M715.500 1055 H722 V1057.500 H715.500 Z"/>
<path d="M722.500 1058 L730.500 1052.500 L732.300 1054.800 L724.300 1060.500 Z"/>
<circle cx="721.500" cy="1060" r="3" fill="#6a6a6a"/><circle cx="731.500" cy="1053.500" r="1.800" fill="#777"/>
<rect x="720" y="1064.500" width="2.600" height="4.500" fill="#e8e8e8"/>
</g>
<path d="M734.500 1067.800 V1072.500 H729.800 Z" fill="#000"/>
<!-- Delcam logo -->
<rect x="1828.200" y="1052" width="70" height="20.600" fill="url(#dlc)"/>
<circle cx="1907.500" cy="1062.300" r="12.800" fill="#f0f0f0"/>
<rect x="1898.200" y="1049" width="22" height="3" fill="#f0f0f0"/><rect x="1898.200" y="1072.600" width="22" height="3" fill="#f0f0f0"/>
<circle cx="1907.500" cy="1062.300" r="10.300" fill="url(#dlb)"/>
<g stroke="#0a1a26" stroke-width="1" fill="none" stroke-linecap="round"><path d="M1908.700 1070.500 V1059" stroke-width="1.400"/><path d="M1908.700 1059 Q1905 1056.500 1901.500 1059 M1908.700 1059 Q1904 1058 1902.500 1061.500 M1908.700 1059 Q1912 1056 1915.500 1058.500 M1908.700 1059 Q1913 1058.500 1914.500 1062.500 M1908.700 1059 Q1907.500 1056 1904.500 1055.500 M1908.700 1059 Q1910 1056 1912.500 1055.500"/></g>
<text x="1831.300" y="1067.500" font-size="16.500" fill="#0a3a5e" opacity="0.600" letter-spacing="0.450" style="font-family:'Liberation Sans',sans-serif" transform="translate(0.800 0.800)">Delcam</text>
<text x="1831.300" y="1067.500" font-size="16.500" fill="#fff" stroke="#fff" stroke-width="0.300" letter-spacing="0.450" style="font-family:'Liberation Sans',sans-serif">Delcam</text>
</svg>

<div id="botedge" class="abs"></div><div id="botedge2" class="abs"></div>

</body></html>
